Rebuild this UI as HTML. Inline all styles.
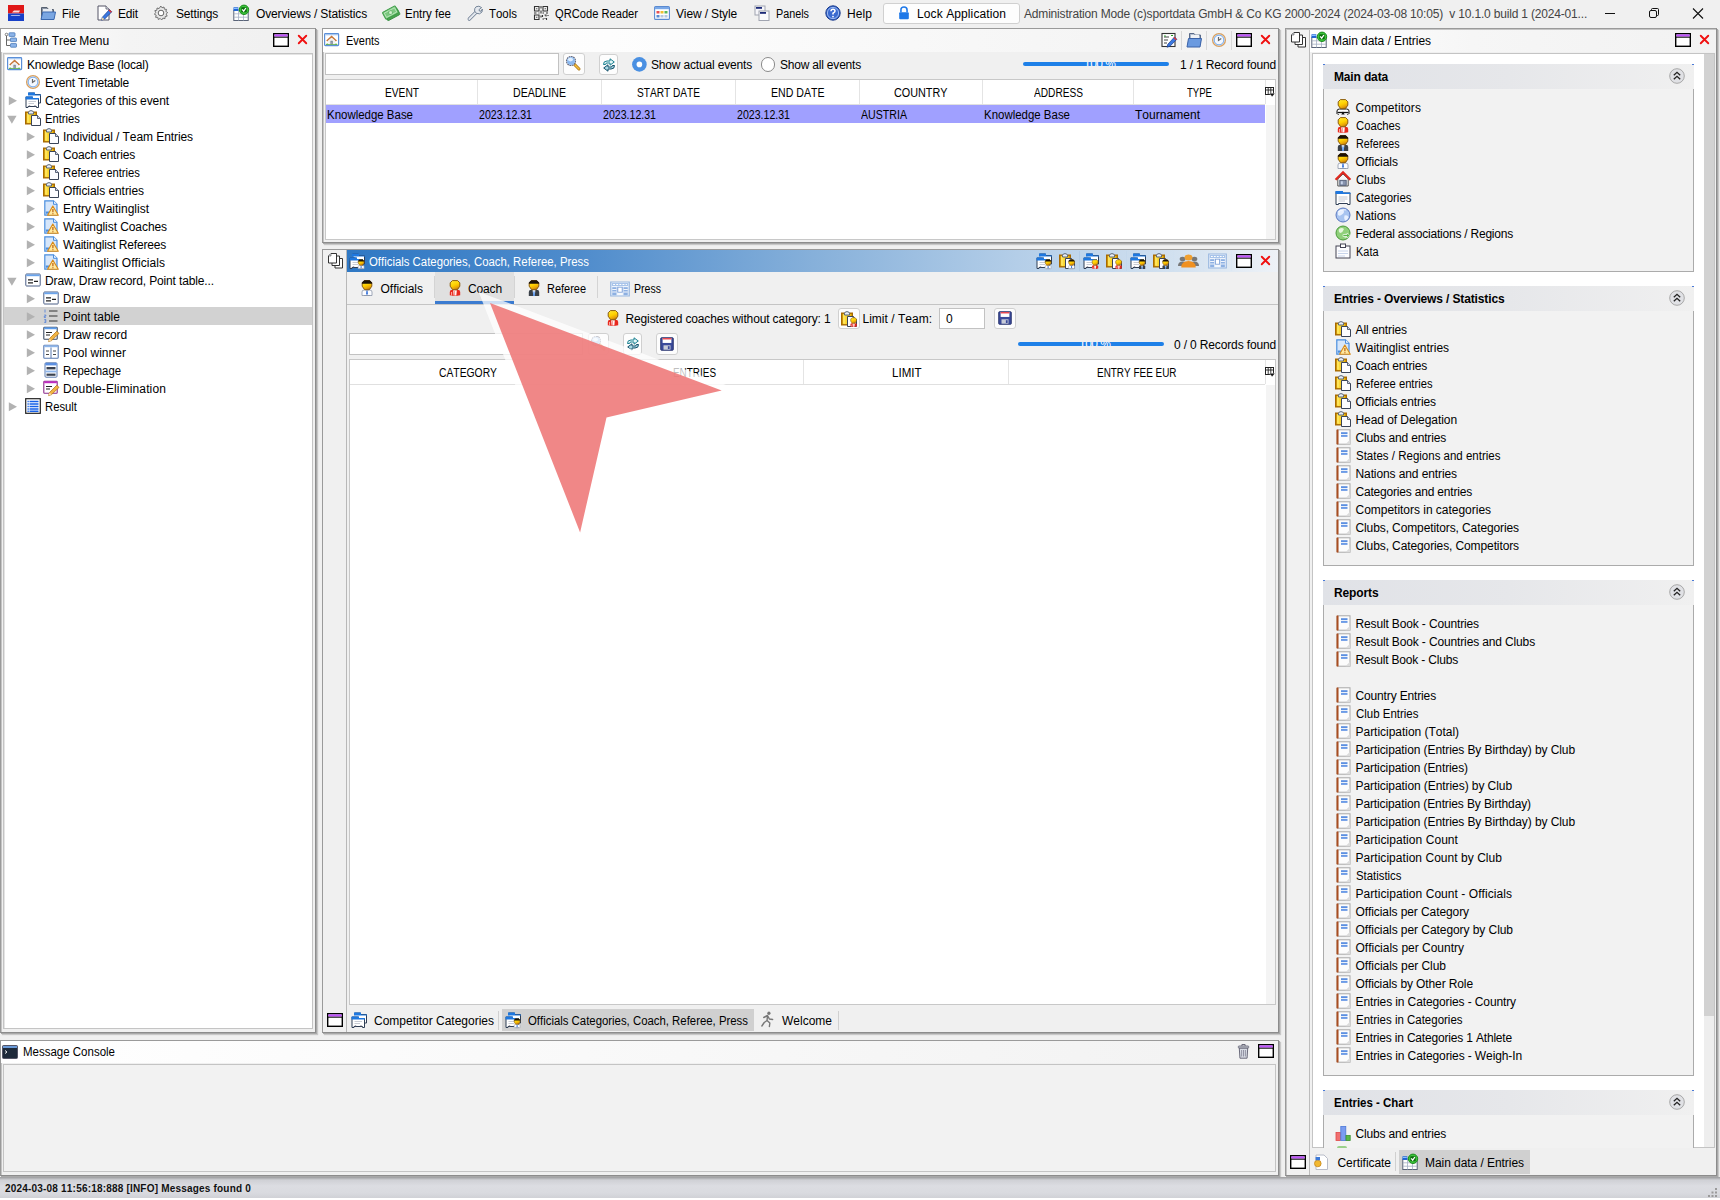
<!DOCTYPE html><html><head><meta charset="utf-8"><title>Sportdata Event Manager</title><style>html,body{margin:0;padding:0}body{width:1720px;height:1200px;position:relative;overflow:hidden;background:#f0f0f0;font-family:"Liberation Sans",sans-serif;font-size:12px;color:#000}
div,span.t{position:absolute}span.t{white-space:pre;font-kerning:none}svg{overflow:visible}</style></head><body>
<svg width="0" height="0" style="position:absolute"><defs><linearGradient id="gy" x1=".2" x2=".6" y1="0" y2="1"><stop offset="0" stop-color="#ffe630"/><stop offset=".5" stop-color="#ffd000"/><stop offset=".8" stop-color="#e8a408"/><stop offset="1" stop-color="#b87408"/></linearGradient><linearGradient id="gc" x1="0" x2="1" y1="0" y2="0"><stop offset="0" stop-color="#d8a000"/><stop offset=".25" stop-color="#ffe040"/><stop offset="1" stop-color="#e8b000"/></linearGradient></defs></svg>
<svg style="position:absolute;left:8px;top:5px" width="16" height="16" viewBox="0 0 16 16" preserveAspectRatio="none"><rect width="16" height="8.500" fill="#e01818"/><rect y="8.500" width="16" height="7.500" fill="#1840c8"/><path d="M4 7.500L6 5.500H12L11 7.500Z" fill="#fff" opacity=".85"/><path d="M2.500 10H12.500L11.500 11H3.500Z" fill="#c8d0f0" opacity=".8"/></svg>
<svg style="position:absolute;left:40px;top:5px" width="16" height="16" viewBox="0 0 16 16" preserveAspectRatio="none"><path d="M1.5 14V2.5H7L8.5 4.5H13.5V14Z" fill="#8a94a4" stroke="#566070" stroke-width="1"/><path d="M3 4H12V7H3Z" fill="#e8ecf2"/><path d="M1 14.5L2.8 7H15.5L14 14.5Z" fill="#7aa6e2" stroke="#3a68b0" stroke-width="1"/></svg>
<span class="t" id="t0" style="top:7.03px;font-size:12px;line-height:14px;letter-spacing:0.000px;left:62px;transform:scaleX(0.9305);transform-origin:0 0;">File</span>
<svg style="position:absolute;left:96px;top:5px" width="16" height="16" viewBox="0 0 16 16" preserveAspectRatio="none"><path d="M2 1H10L13 4V15H2Z" fill="#fff" stroke="#556" stroke-width="1"/><path d="M10 1V4H13" fill="#e4e8f0" stroke="#556" stroke-width=".8"/><path d="M13.5 4.5L15.8 6.8L8.5 14.2L5.5 15.2L6.4 12.2Z" fill="#3a78e0" stroke="#1a3a8a" stroke-width=".7"/><path d="M13.5 4.5L15.8 6.8L14.8 7.8L12.5 5.5Z" fill="#e83030"/><path d="M5.5 15.2L6.4 12.2L8.5 14.2Z" fill="#f4d8a0"/></svg>
<span class="t" id="t1" style="top:7.03px;font-size:12px;line-height:14px;letter-spacing:-0.172px;left:118px;">Edit</span>
<svg style="position:absolute;left:153px;top:5px" width="16" height="16" viewBox="0 0 16 16" preserveAspectRatio="none"><path d="M8 .8L9.2 2.6L11.2 1.8L11.6 4L13.8 4.2L13 6.2L14.9 7.4L13.3 8.9L14.4 10.9L12.3 11.3L12.2 13.5L10.1 12.9L8.9 14.8L7.4 13.2L5.5 14.3L5 12.2L2.8 12.1L3.4 10L1.5 8.9L3.1 7.4L2 5.5L4.100 5L4.2 2.800L6.300 3.400Z" fill="#e8e8e8" stroke="#666" stroke-width=".9" transform="translate(-.2,.2)"/><circle cx="8" cy="8" r="2.8" fill="#fff" stroke="#666" stroke-width="1"/></svg>
<span class="t" id="t2" style="top:7.03px;font-size:12px;line-height:14px;letter-spacing:-0.170px;left:176px;">Settings</span>
<svg style="position:absolute;left:233px;top:5px" width="16" height="16" viewBox="0 0 16 16" preserveAspectRatio="none"><rect x=".8" y="5.200" width="14.400" height="10.300" fill="#fff" stroke="#5a6478" stroke-width="1"/><path d="M1 8.800H15M1 12.200H15M5.500 5.200V15.500M10.500 8.800V15.500" stroke="#a4b0c4" stroke-width=".8"/><rect x=".5" y="2.300" width="4.800" height="3.600" fill="#1c64d8"/><rect x="1" y="3" width="3.800" height="1" fill="#8cc0ff"/><circle cx="11" cy="4.800" r="4.700" fill="#3cc43c" stroke="#1c8c1c" stroke-width="1"/><rect x="8.300" y="2.300" width="5.400" height="5" rx=".6" fill="#0c6c0c"/><path d="M9.200 4.300L10.700 6.200L12.900 3" fill="none" stroke="#fff" stroke-width="1.300"/></svg>
<span class="t" id="t3" style="top:7.03px;font-size:12px;line-height:14px;letter-spacing:-0.138px;left:256px;">Overviews / Statistics</span>
<svg style="position:absolute;left:383px;top:5px" width="16" height="16" viewBox="0 0 16 16" preserveAspectRatio="none"><g transform="rotate(-28 8 8)"><rect x="1.500" y="6" width="14" height="7.500" rx="1" fill="#4aa450" stroke="#2f8a3a" stroke-width=".8"/><rect x=".5" y="3.500" width="14.500" height="7.800" rx="1" fill="#7cc880" stroke="#3a9a44" stroke-width=".9"/><rect x="2" y="5" width="11.500" height="4.800" fill="none" stroke="#c8ecc8" stroke-width=".7"/><circle cx="7.800" cy="7.400" r="1.900" fill="#d4f0d0" stroke="#3a9a44" stroke-width=".5"/></g></svg>
<span class="t" id="t4" style="top:7.03px;font-size:12px;line-height:14px;letter-spacing:0.000px;left:405px;transform:scaleX(0.9577);transform-origin:0 0;">Entry fee</span>
<svg style="position:absolute;left:467px;top:5px" width="16" height="16" viewBox="0 0 16 16" preserveAspectRatio="none"><path d="M2.300 14L8.800 7.500" stroke="#6a7a90" stroke-width="3.400" stroke-linecap="round"/><path d="M2.300 14L8.800 7.500" stroke="#e4e8ee" stroke-width="1.900" stroke-linecap="round"/><path d="M9 1.800Q12 .2 14.600 2.600L12 4.600L12.400 6L14 6.200L15.400 4Q16 7.600 12.600 8.800Q8.600 9.200 7.600 6Q7.200 3.400 9 1.800Z" fill="#e4e8ee" stroke="#6a7a90" stroke-width=".9"/></svg>
<span class="t" id="t5" style="top:7.03px;font-size:12px;line-height:14px;letter-spacing:0.000px;left:489px;transform:scaleX(0.9542);transform-origin:0 0;">Tools</span>
<svg style="position:absolute;left:533px;top:5px" width="16" height="16" viewBox="0 0 16 16" preserveAspectRatio="none"><path d="M1.500 1.500H6V6H1.500ZM10 1.500H14.500V6H10ZM1.500 10H6V14.500H1.500Z" fill="none" stroke="#333" stroke-width="1.100"/><path d="M3.200 3.200H4.300V4.300H3.200ZM11.700 3.200H12.800V4.300H11.700ZM3.200 11.700H4.300V12.800H3.200Z" fill="#333"/><path d="M8 1V3.500M8 5.500V8.500M1 8H3.500M5.500 8H6.500M9.500 8H11M13 8H15M9.500 10V12M11.500 10H13V11.500M9.500 14H11M13.500 13V15M15 10V11M8 10.500V12.500M11.500 13.500H12.500" stroke="#333" stroke-width="1.100" fill="none"/></svg>
<span class="t" id="t6" style="top:7.03px;font-size:12px;line-height:14px;letter-spacing:0.000px;left:555px;transform:scaleX(0.9285);transform-origin:0 0;">QRCode Reader</span>
<svg style="position:absolute;left:654px;top:5px" width="16" height="16" viewBox="0 0 16 16" preserveAspectRatio="none"><rect x=".6" y="1.6" width="14.8" height="12.8" rx="1" fill="#fff" stroke="#5a8ad0" stroke-width="1.1"/><rect x="1" y="2" width="14" height="2.2" fill="#7aa8e8"/><rect x="2.5" y="6" width="3" height="2.5" fill="#e85050"/><rect x="6.5" y="6" width="3" height="2.5" fill="#f0c030"/><rect x="10.500" y="6" width="3" height="2.5" fill="#5ab85a"/><rect x="2.5" y="10" width="3" height="2.5" fill="#5a8ad0"/><rect x="6.500" y="10" width="3" height="2.5" fill="#b8c8e0"/><rect x="10.500" y="10" width="3" height="2.5" fill="#b8c8e0"/></svg>
<span class="t" id="t7" style="top:7.03px;font-size:12px;line-height:14px;letter-spacing:-0.142px;left:676px;">View / Style</span>
<svg style="position:absolute;left:754px;top:5px" width="16" height="16" viewBox="0 0 16 16" preserveAspectRatio="none"><rect x="1" y="1" width="10" height="9" fill="#f6f6fa" stroke="#a0a4b0" stroke-width="1"/><rect x="2" y="2" width="6" height="1.800" fill="#1c2a78"/><rect x="5" y="6" width="10" height="9.500" fill="#fbfbfd" stroke="#a0a4b0" stroke-width="1"/><rect x="6" y="7" width="6" height="1.800" fill="#1c2a78"/></svg>
<span class="t" id="t8" style="top:7.03px;font-size:12px;line-height:14px;letter-spacing:0.000px;left:776px;transform:scaleX(0.8991);transform-origin:0 0;">Panels</span>
<svg style="position:absolute;left:825px;top:5px" width="16" height="16" viewBox="0 0 16 16" preserveAspectRatio="none"><circle cx="8" cy="8" r="7.2" fill="#3a6ad0" stroke="#1a3a8a" stroke-width="1"/><circle cx="8" cy="8" r="5.6" fill="none" stroke="#9ab8f0" stroke-width="1"/><path d="M6 6.2Q6 4.200 8 4.200Q10 4.200 10 6Q10 7.200 8 8.200V9.600" fill="none" stroke="#fff" stroke-width="1.500"/><circle cx="8" cy="11.600" r=".9" fill="#fff"/></svg>
<span class="t" id="t9" style="top:7.03px;font-size:12px;line-height:14px;letter-spacing:0.078px;left:847px;">Help</span>
<div style="left:883px;top:3px;width:137px;height:21px;background:#fdfdfd;border:1px solid #d0d0d0;border-radius:3px;box-sizing:border-box;"></div>
<svg style="position:absolute;left:897px;top:6px" width="14" height="14" viewBox="0 0 16 16" preserveAspectRatio="none"><path d="M4.5 7V4.500Q4.500 1.200 8 1.200Q11.500 1.200 11.500 4.500V7" fill="none" stroke="#1e78e8" stroke-width="1.800"/><rect x="2.500" y="7" width="11" height="8.200" rx="1.200" fill="#1e78e8"/></svg>
<span class="t" id="t10" style="top:7.03px;font-size:12px;line-height:14px;letter-spacing:0.101px;left:917px;">Lock Application</span>
<span class="t" id="t11" style="top:7.03px;font-size:12px;line-height:14px;letter-spacing:-0.179px;left:1024px;color:#444;">Administration Mode (c)sportdata GmbH &amp; Co KG 2000-2024 (2024-03-08 10:05)  v 10.1.0 build 1 (2024-01...</span>
<svg style="position:absolute;left:1600px;top:4px" width="116" height="20" viewBox="0 0 116 20"><path d="M5 9.500H15" stroke="#111" stroke-width="1"/><rect x="49.500" y="6.500" width="7" height="7" rx="1.500" fill="none" stroke="#111" stroke-width="1"/><path d="M51.500 6.500V5.500Q51.500 4.500 52.500 4.500H57.500Q58.500 4.500 58.500 5.500V10.500Q58.500 11.500 57.500 11.500H56.500" fill="none" stroke="#111" stroke-width="1"/><path d="M93 4.500L103 14.500M103 4.500L93 14.500" stroke="#111" stroke-width="1.100"/></svg>
<div style="left:0px;top:28px;width:316px;height:1005px;background:#f0f0f0;border:1px solid #9a9a9a;border-right-color:#8c8c8c;border-bottom-color:#8c8c8c;box-shadow:1px 1px 0 #a8a8a8, 2px 2px 1px #c8c8c8, inset 1px 1px 0 #c4c4c4;box-sizing:border-box;"></div>
<div style="left:1px;top:29px;width:314px;height:23px;background:linear-gradient(90deg,#fff 0,#f4f4f4 40%,#f0f0f0 100%);"></div>
<svg style="position:absolute;left:4px;top:32px" width="16" height="16" viewBox="0 0 16 16" preserveAspectRatio="none"><path d="M2.5 3V13.5H6M2.5 8H6" fill="none" stroke="#666" stroke-width="1"/><circle cx="2.5" cy="2.5" r="1.3" fill="#fff" stroke="#666" stroke-width=".8"/><rect x="5" y="0.8" width="6" height="3.6" rx=".6" fill="#8db5ea" stroke="#4a7ab8" stroke-width=".8"/><rect x="6.5" y="6" width="6" height="3.6" rx=".6" fill="#8db5ea" stroke="#4a7ab8" stroke-width=".8"/><rect x="6.5" y="11.6" width="6" height="3.6" rx=".6" fill="#8db5ea" stroke="#4a7ab8" stroke-width=".8"/></svg>
<span class="t" id="t12" style="top:34.03px;font-size:12px;line-height:14px;letter-spacing:-0.098px;left:23px;">Main Tree Menu</span>
<svg style="position:absolute;left:273px;top:32px" width="16" height="16" viewBox="0 0 16 16" preserveAspectRatio="none"><rect x=".7" y="1.7" width="14.6" height="12.6" fill="#fff" stroke="#000" stroke-width="1.4"/><rect x="1.4" y="2.4" width="13.2" height="2.2" fill="#c050ff"/><path d="M1 5.2H15" stroke="#000" stroke-width="1"/></svg>
<svg style="position:absolute;left:295px;top:32px" width="15" height="15" viewBox="0 0 16 16" preserveAspectRatio="none"><path d="M4 4L12 12M12 4L4 12" stroke="#f01010" stroke-width="2" stroke-linecap="round"/></svg>
<div style="left:3px;top:53px;width:310px;height:976px;background:#fff;border:1px solid #c4c4c4;box-sizing:border-box;box-shadow:inset 1px 1px 0 #e4e4e4;"></div>
<svg style="position:absolute;left:7px;top:57px" width="16" height="16" viewBox="0 0 16 16" preserveAspectRatio="none"><rect x=".6" y=".6" width="14" height="12" rx=".8" fill="#fff" stroke="#5b8fd8" stroke-width="1.200"/><rect x="1.200" y="1" width="12.800" height="1.300" fill="#a8c8f0"/><path d="M7.600 2.600L13 7.600L11.900 8.600L7.600 4.800L3.300 8.600L2.200 7.600Z" fill="#c8783a"/><path d="M4.300 7.600L7.600 4.800L10.900 7.600V11.300H4.300Z" fill="#f2f2f2"/><rect x="6.500" y="7.800" width="2.200" height="3.500" fill="#6b7686"/><rect x="7.100" y="8.400" width="1" height="2.900" fill="#9aa4b4"/><path d="M1.800 11.600Q3.300 9.600 4.600 11.600ZM10.600 11.600Q12 9.600 13.400 11.600Z" fill="#4fae3a"/><path d="M1.800 11.500H13.400" stroke="#58a848" stroke-width=".8"/></svg>
<span class="t" id="t13" style="top:58.03px;font-size:12px;line-height:14px;letter-spacing:-0.208px;left:27px;">Knowledge Base (local)</span>
<svg style="position:absolute;left:25px;top:74px" width="16" height="16" viewBox="0 0 16 16" preserveAspectRatio="none"><circle cx="8" cy="8" r="6.400" fill="#f6f9ff" stroke="#d8a060" stroke-width="1.300"/><circle cx="8" cy="8" r="4.900" fill="#f4f8ff" stroke="#6aa4ea" stroke-width="1"/><path d="M7.500 5V8.400L10.300 6.500" fill="none" stroke="#666" stroke-width="1.200"/></svg>
<span class="t" id="t14" style="top:76.03px;font-size:12px;line-height:14px;letter-spacing:-0.181px;left:45px;">Event Timetable</span>
<svg style="position:absolute;left:25px;top:92px" width="16" height="16" viewBox="0 0 16 16" preserveAspectRatio="none"><path d="M3.5 2.5V1H9.5V2.5H15.5V11H13" fill="#fff" stroke="#2f3e55" stroke-width="1"/><path d="M3 0.6H10V2.4H16V3.6H3Z" fill="#1e78e0"/><path d="M1 15.5V5H7.5V6.5H13.5V15.5H11.5V14.5H3V15.5Z" fill="#fff" stroke="#2f3e55" stroke-width="1"/><path d="M0.5 4.5H8V6H14V7.4H0.5Z" fill="#1e78e0"/><path d="M3.5 9.5H11M3.5 11.5H9" stroke="#c8ccd4" stroke-width="1"/><path d="M3.8 14H5.2M9.3 14H10.7" stroke="#556" stroke-width="1"/></svg>
<span class="t" id="t15" style="top:94.03px;font-size:12px;line-height:14px;letter-spacing:-0.087px;left:45px;">Categories of this event</span>
<svg style="position:absolute;left:8px;top:95.5px" width="10" height="10" viewBox="0 0 10 10"><path d="M.8 .2L9 4.700L.8 9.200Z" fill="#b2b2b2"/></svg>
<svg style="position:absolute;left:25px;top:110px" width="16" height="16" viewBox="0 0 16 16" preserveAspectRatio="none"><rect x=".7" y="2.2" width="10.6" height="11.6" fill="url(#gc)" stroke="#a86a00" stroke-width="1.4"/><rect x="2" y="3.5" width="2" height="9" fill="#ffe45a"/><path d="M3.5 4V2.2Q3.5 1 6 0.6Q8.5 1 8.5 2.2V4Z" fill="#e8eef6" stroke="#5a6678" stroke-width="1"/><path d="M6.5 5.5H12.5L15.5 8.5V15.5H6.5Z" fill="#fdfdff" stroke="#3a4458" stroke-width="1"/><path d="M12.5 5.5V8.5H15.5" fill="#cfd4e8" stroke="#3a4458" stroke-width=".8"/></svg>
<span class="t" id="t16" style="top:112.03px;font-size:12px;line-height:14px;letter-spacing:0.000px;left:45px;transform:scaleX(0.9368);transform-origin:0 0;">Entries</span>
<svg style="position:absolute;left:7px;top:114.5px" width="10" height="10" viewBox="0 0 10 10"><path d="M.2 .8H9.600L4.900 8.800Z" fill="#b2b2b2"/></svg>
<svg style="position:absolute;left:43px;top:128px" width="16" height="16" viewBox="0 0 16 16" preserveAspectRatio="none"><rect x=".7" y="2.2" width="10.6" height="11.6" fill="url(#gc)" stroke="#a86a00" stroke-width="1.4"/><rect x="2" y="3.5" width="2" height="9" fill="#ffe45a"/><path d="M3.5 4V2.2Q3.5 1 6 0.6Q8.5 1 8.5 2.2V4Z" fill="#e8eef6" stroke="#5a6678" stroke-width="1"/><path d="M6.5 5.5H12.5L15.5 8.5V15.5H6.5Z" fill="#fdfdff" stroke="#3a4458" stroke-width="1"/><path d="M12.5 5.5V8.5H15.5" fill="#cfd4e8" stroke="#3a4458" stroke-width=".8"/></svg>
<span class="t" id="t17" style="top:130.03px;font-size:12px;line-height:14px;letter-spacing:-0.083px;left:63px;">Individual / Team Entries</span>
<svg style="position:absolute;left:26px;top:131.5px" width="10" height="10" viewBox="0 0 10 10"><path d="M.8 .2L9 4.700L.8 9.200Z" fill="#b2b2b2"/></svg>
<svg style="position:absolute;left:43px;top:146px" width="16" height="16" viewBox="0 0 16 16" preserveAspectRatio="none"><rect x=".7" y="2.2" width="10.6" height="11.6" fill="url(#gc)" stroke="#a86a00" stroke-width="1.4"/><rect x="2" y="3.5" width="2" height="9" fill="#ffe45a"/><path d="M3.5 4V2.2Q3.5 1 6 0.6Q8.5 1 8.5 2.2V4Z" fill="#e8eef6" stroke="#5a6678" stroke-width="1"/><path d="M6.5 5.5H12.5L15.5 8.5V15.5H6.5Z" fill="#fdfdff" stroke="#3a4458" stroke-width="1"/><path d="M12.5 5.5V8.5H15.5" fill="#cfd4e8" stroke="#3a4458" stroke-width=".8"/></svg>
<span class="t" id="t18" style="top:148.03px;font-size:12px;line-height:14px;letter-spacing:-0.157px;left:63px;">Coach entries</span>
<svg style="position:absolute;left:26px;top:149.5px" width="10" height="10" viewBox="0 0 10 10"><path d="M.8 .2L9 4.700L.8 9.200Z" fill="#b2b2b2"/></svg>
<svg style="position:absolute;left:43px;top:164px" width="16" height="16" viewBox="0 0 16 16" preserveAspectRatio="none"><rect x=".7" y="2.2" width="10.6" height="11.6" fill="url(#gc)" stroke="#a86a00" stroke-width="1.4"/><rect x="2" y="3.5" width="2" height="9" fill="#ffe45a"/><path d="M3.5 4V2.2Q3.5 1 6 0.6Q8.5 1 8.5 2.2V4Z" fill="#e8eef6" stroke="#5a6678" stroke-width="1"/><path d="M6.5 5.5H12.5L15.5 8.5V15.5H6.5Z" fill="#fdfdff" stroke="#3a4458" stroke-width="1"/><path d="M12.5 5.5V8.5H15.5" fill="#cfd4e8" stroke="#3a4458" stroke-width=".8"/></svg>
<span class="t" id="t19" style="top:166.03px;font-size:12px;line-height:14px;letter-spacing:0.000px;left:63px;transform:scaleX(0.9385);transform-origin:0 0;">Referee entries</span>
<svg style="position:absolute;left:26px;top:167.5px" width="10" height="10" viewBox="0 0 10 10"><path d="M.8 .2L9 4.700L.8 9.200Z" fill="#b2b2b2"/></svg>
<svg style="position:absolute;left:43px;top:182px" width="16" height="16" viewBox="0 0 16 16" preserveAspectRatio="none"><rect x=".7" y="2.2" width="10.6" height="11.6" fill="url(#gc)" stroke="#a86a00" stroke-width="1.4"/><rect x="2" y="3.5" width="2" height="9" fill="#ffe45a"/><path d="M3.5 4V2.2Q3.5 1 6 0.6Q8.5 1 8.5 2.2V4Z" fill="#e8eef6" stroke="#5a6678" stroke-width="1"/><path d="M6.5 5.5H12.5L15.5 8.5V15.5H6.5Z" fill="#fdfdff" stroke="#3a4458" stroke-width="1"/><path d="M12.5 5.5V8.5H15.5" fill="#cfd4e8" stroke="#3a4458" stroke-width=".8"/></svg>
<span class="t" id="t20" style="top:184.03px;font-size:12px;line-height:14px;letter-spacing:-0.061px;left:63px;">Officials entries</span>
<svg style="position:absolute;left:26px;top:185.5px" width="10" height="10" viewBox="0 0 10 10"><path d="M.8 .2L9 4.700L.8 9.200Z" fill="#b2b2b2"/></svg>
<svg style="position:absolute;left:43px;top:200px" width="16" height="16" viewBox="0 0 16 16" preserveAspectRatio="none"><path d="M1.8 0.8H10.5L14 4.3V15.2H1.8Z" fill="#d6e6fa" stroke="#4a8ede" stroke-width="1.2"/><path d="M10.5 0.8V4.3H14" fill="#eaf2fd" stroke="#4a8ede" stroke-width="1"/><rect x="2.8" y="11.5" width="3.5" height="2.2" fill="#4a8ede"/><path d="M9.8 6L15.3 15.2H4.6Z" fill="#ffe9a0" stroke="#d88a18" stroke-width="1.1" stroke-linejoin="round"/><path d="M9.9 9V12.3M9.9 13.3V14.3" stroke="#c0681a" stroke-width="1.3"/></svg>
<span class="t" id="t21" style="top:202.03px;font-size:12px;line-height:14px;letter-spacing:-0.002px;left:63px;">Entry Waitinglist</span>
<svg style="position:absolute;left:26px;top:203.5px" width="10" height="10" viewBox="0 0 10 10"><path d="M.8 .2L9 4.700L.8 9.200Z" fill="#b2b2b2"/></svg>
<svg style="position:absolute;left:43px;top:218px" width="16" height="16" viewBox="0 0 16 16" preserveAspectRatio="none"><path d="M1.8 0.8H10.5L14 4.3V15.2H1.8Z" fill="#d6e6fa" stroke="#4a8ede" stroke-width="1.2"/><path d="M10.5 0.8V4.3H14" fill="#eaf2fd" stroke="#4a8ede" stroke-width="1"/><rect x="2.8" y="11.5" width="3.5" height="2.2" fill="#4a8ede"/><path d="M9.8 6L15.3 15.2H4.6Z" fill="#ffe9a0" stroke="#d88a18" stroke-width="1.1" stroke-linejoin="round"/><path d="M9.9 9V12.3M9.9 13.3V14.3" stroke="#c0681a" stroke-width="1.3"/></svg>
<span class="t" id="t22" style="top:220.03px;font-size:12px;line-height:14px;letter-spacing:-0.072px;left:63px;">Waitinglist Coaches</span>
<svg style="position:absolute;left:26px;top:221.5px" width="10" height="10" viewBox="0 0 10 10"><path d="M.8 .2L9 4.700L.8 9.200Z" fill="#b2b2b2"/></svg>
<svg style="position:absolute;left:43px;top:236px" width="16" height="16" viewBox="0 0 16 16" preserveAspectRatio="none"><path d="M1.8 0.8H10.5L14 4.3V15.2H1.8Z" fill="#d6e6fa" stroke="#4a8ede" stroke-width="1.2"/><path d="M10.5 0.8V4.3H14" fill="#eaf2fd" stroke="#4a8ede" stroke-width="1"/><rect x="2.8" y="11.5" width="3.5" height="2.2" fill="#4a8ede"/><path d="M9.8 6L15.3 15.2H4.6Z" fill="#ffe9a0" stroke="#d88a18" stroke-width="1.1" stroke-linejoin="round"/><path d="M9.9 9V12.3M9.9 13.3V14.3" stroke="#c0681a" stroke-width="1.3"/></svg>
<span class="t" id="t23" style="top:238.03px;font-size:12px;line-height:14px;letter-spacing:-0.186px;left:63px;">Waitinglist Referees</span>
<svg style="position:absolute;left:26px;top:239.5px" width="10" height="10" viewBox="0 0 10 10"><path d="M.8 .2L9 4.700L.8 9.200Z" fill="#b2b2b2"/></svg>
<svg style="position:absolute;left:43px;top:254px" width="16" height="16" viewBox="0 0 16 16" preserveAspectRatio="none"><path d="M1.8 0.8H10.5L14 4.3V15.2H1.8Z" fill="#d6e6fa" stroke="#4a8ede" stroke-width="1.2"/><path d="M10.5 0.8V4.3H14" fill="#eaf2fd" stroke="#4a8ede" stroke-width="1"/><rect x="2.8" y="11.5" width="3.5" height="2.2" fill="#4a8ede"/><path d="M9.8 6L15.3 15.2H4.6Z" fill="#ffe9a0" stroke="#d88a18" stroke-width="1.1" stroke-linejoin="round"/><path d="M9.9 9V12.3M9.9 13.3V14.3" stroke="#c0681a" stroke-width="1.3"/></svg>
<span class="t" id="t24" style="top:256.03px;font-size:12px;line-height:14px;letter-spacing:0.062px;left:63px;">Waitinglist Officials</span>
<svg style="position:absolute;left:26px;top:257.5px" width="10" height="10" viewBox="0 0 10 10"><path d="M.8 .2L9 4.700L.8 9.200Z" fill="#b2b2b2"/></svg>
<svg style="position:absolute;left:25px;top:272px" width="16" height="16" viewBox="0 0 16 16" preserveAspectRatio="none"><rect x=".8" y="2" width="14.400" height="12" rx=".8" fill="#fff" stroke="#4a5e86" stroke-width="1"/><rect x="1.300" y="2.400" width="13.400" height="1.800" fill="#6aa4ec"/><path d="M3 7.800H8M3 10.800H8M9 9.300H13" stroke="#222" stroke-width="1.200"/></svg>
<span class="t" id="t25" style="top:274.03px;font-size:12px;line-height:14px;letter-spacing:-0.134px;left:45px;">Draw, Draw record, Point table...</span>
<svg style="position:absolute;left:7px;top:276.5px" width="10" height="10" viewBox="0 0 10 10"><path d="M.2 .8H9.600L4.900 8.800Z" fill="#b2b2b2"/></svg>
<svg style="position:absolute;left:43px;top:290px" width="16" height="16" viewBox="0 0 16 16" preserveAspectRatio="none"><rect x=".8" y="2" width="14.400" height="12" rx=".8" fill="#fff" stroke="#4a5e86" stroke-width="1"/><rect x="1.300" y="2.400" width="13.400" height="1.800" fill="#6aa4ec"/><path d="M3 7.800H8M3 10.800H8M9 9.300H13" stroke="#222" stroke-width="1.200"/></svg>
<span class="t" id="t26" style="top:292.03px;font-size:12px;line-height:14px;letter-spacing:0.000px;left:63px;transform:scaleX(0.9637);transform-origin:0 0;">Draw</span>
<svg style="position:absolute;left:26px;top:293.5px" width="10" height="10" viewBox="0 0 10 10"><path d="M.8 .2L9 4.700L.8 9.200Z" fill="#b2b2b2"/></svg>
<div style="left:4px;top:307px;width:308px;height:18px;background:#d2d2d2;"></div>
<svg style="position:absolute;left:43px;top:308px" width="16" height="16" viewBox="0 0 16 16" preserveAspectRatio="none"><path d="M6 3H14.500M6 8H14.500M6 13H14.500" stroke="#333" stroke-width="1.100"/><path d="M2 1.5V4.5M1.3 7H2.8V8.2H1.3V9.5H2.8M1.3 11.5H2.8V14.5H1.3M1.5 13H2.8" stroke="#4a7ad8" stroke-width=".8" fill="none"/></svg>
<span class="t" id="t27" style="top:310.03px;font-size:12px;line-height:14px;letter-spacing:0.026px;left:63px;">Point table</span>
<svg style="position:absolute;left:26px;top:311.5px" width="10" height="10" viewBox="0 0 10 10"><path d="M.8 .2L9 4.700L.8 9.200Z" fill="#b2b2b2"/></svg>
<svg style="position:absolute;left:43px;top:326px" width="16" height="16" viewBox="0 0 16 16" preserveAspectRatio="none"><rect x=".8" y="1.2" width="13.4" height="12" rx=".8" fill="#fff" stroke="#3a4a62" stroke-width="1.1"/><rect x="1.2" y="1.4" width="12.6" height="1.8" fill="#5c9cec"/><path d="M3 6.5H9M3 9H7" stroke="#222" stroke-width="1.2"/><path d="M13.8 5.2L16 7.4L8.5 14.6L5.6 15.6L6.5 12.6Z" fill="#f2b544" stroke="#b8781c" stroke-width=".8"/><path d="M5.6 15.6L6.5 12.6L8.5 14.6Z" fill="#f6dcae"/></svg>
<span class="t" id="t28" style="top:328.03px;font-size:12px;line-height:14px;letter-spacing:-0.124px;left:63px;">Draw record</span>
<svg style="position:absolute;left:26px;top:329.5px" width="10" height="10" viewBox="0 0 10 10"><path d="M.8 .2L9 4.700L.8 9.200Z" fill="#b2b2b2"/></svg>
<svg style="position:absolute;left:43px;top:344px" width="16" height="16" viewBox="0 0 16 16" preserveAspectRatio="none"><rect x=".8" y="1.2" width="14.4" height="13" rx=".8" fill="#fff" stroke="#5a7ab0" stroke-width="1.1"/><rect x="1.2" y="1.4" width="13.6" height="1.8" fill="#8db5ea"/><path d="M8 3.5V14" stroke="#5a7ab0" stroke-width="1"/><path d="M3 7H6M3 10.5H6M10 7H13M10 10.5H13" stroke="#444" stroke-width="1.2"/></svg>
<span class="t" id="t29" style="top:346.03px;font-size:12px;line-height:14px;letter-spacing:0.027px;left:63px;">Pool winner</span>
<svg style="position:absolute;left:26px;top:347.5px" width="10" height="10" viewBox="0 0 10 10"><path d="M.8 .2L9 4.700L.8 9.200Z" fill="#b2b2b2"/></svg>
<svg style="position:absolute;left:43px;top:362px" width="16" height="16" viewBox="0 0 16 16" preserveAspectRatio="none"><rect x="2" y=".8" width="12" height="14.4" rx="1" fill="#fff" stroke="#5a7ab0" stroke-width="1"/><rect x="2.4" y="1" width="11.2" height="2.4" fill="#5c8fe0"/><rect x="3.5" y="5" width="9" height="2.4" fill="#3a4250"/><rect x="2.4" y="8.6" width="11.2" height="1.8" fill="#8db5ea"/><rect x="3.5" y="11.6" width="9" height="2.2" fill="#3a4250"/></svg>
<span class="t" id="t30" style="top:364.03px;font-size:12px;line-height:14px;letter-spacing:0.000px;left:63px;transform:scaleX(0.9448);transform-origin:0 0;">Repechage</span>
<svg style="position:absolute;left:26px;top:365.5px" width="10" height="10" viewBox="0 0 10 10"><path d="M.8 .2L9 4.700L.8 9.200Z" fill="#b2b2b2"/></svg>
<svg style="position:absolute;left:43px;top:380px" width="16" height="16" viewBox="0 0 16 16" preserveAspectRatio="none"><rect x=".8" y="1.2" width="13.4" height="12" rx=".8" fill="#fff" stroke="#8a2a8a" stroke-width="1.1"/><rect x="1.2" y="1.4" width="12.6" height="1.8" fill="#c02ac0"/><path d="M3 6.5H9M3 9H7" stroke="#222" stroke-width="1.2"/><path d="M13.8 5.2L16 7.4L8.5 14.6L5.6 15.6L6.5 12.6Z" fill="#f2b544" stroke="#b8781c" stroke-width=".8"/><path d="M5.6 15.6L6.5 12.6L8.5 14.6Z" fill="#f6dcae"/></svg>
<span class="t" id="t31" style="top:382.03px;font-size:12px;line-height:14px;letter-spacing:0.127px;left:63px;">Double-Elimination</span>
<svg style="position:absolute;left:26px;top:383.5px" width="10" height="10" viewBox="0 0 10 10"><path d="M.8 .2L9 4.700L.8 9.200Z" fill="#b2b2b2"/></svg>
<svg style="position:absolute;left:25px;top:398px" width="16" height="16" viewBox="0 0 16 16" preserveAspectRatio="none"><rect x=".7" y=".7" width="14.6" height="14.6" fill="#fff" stroke="#222" stroke-width="1.2"/><path d="M2.5 3.5H13.5M2.5 6H13.5M2.5 8.5H13.5M2.5 11H13.5M2.5 13.2H13.5" stroke="#1560e8" stroke-width="1.5"/><path d="M4.2 2V14" stroke="#fff" stroke-width=".8"/></svg>
<span class="t" id="t32" style="top:400.03px;font-size:12px;line-height:14px;letter-spacing:0.000px;left:45px;transform:scaleX(0.9407);transform-origin:0 0;">Result</span>
<svg style="position:absolute;left:8px;top:401.5px" width="10" height="10" viewBox="0 0 10 10"><path d="M.8 .2L9 4.700L.8 9.200Z" fill="#b2b2b2"/></svg>
<div style="left:322px;top:28px;width:957px;height:215px;background:#f0f0f0;border:1px solid #9a9a9a;border-right-color:#8c8c8c;border-bottom-color:#8c8c8c;box-shadow:1px 1px 0 #a8a8a8, 2px 2px 1px #c8c8c8, inset 1px 1px 0 #c4c4c4;box-sizing:border-box;"></div>
<div style="left:323px;top:29px;width:955px;height:23px;background:linear-gradient(90deg,#fff 0,#fdfdfd 30%,#f2f2f2 100%);"></div>
<svg style="position:absolute;left:324px;top:33px" width="16" height="16" viewBox="0 0 16 16" preserveAspectRatio="none"><rect x=".6" y=".6" width="14" height="12" rx=".8" fill="#fff" stroke="#5b8fd8" stroke-width="1.200"/><rect x="1.200" y="1" width="12.800" height="1.300" fill="#a8c8f0"/><path d="M7.600 2.600L13 7.600L11.900 8.600L7.600 4.800L3.300 8.600L2.200 7.600Z" fill="#c8783a"/><path d="M4.300 7.600L7.600 4.800L10.900 7.600V11.300H4.300Z" fill="#f2f2f2"/><rect x="6.500" y="7.800" width="2.200" height="3.500" fill="#6b7686"/><rect x="7.100" y="8.400" width="1" height="2.900" fill="#9aa4b4"/><path d="M1.800 11.600Q3.300 9.600 4.600 11.600ZM10.600 11.600Q12 9.600 13.400 11.600Z" fill="#4fae3a"/><path d="M1.800 11.500H13.400" stroke="#58a848" stroke-width=".8"/></svg>
<span class="t" id="t33" style="top:34.03px;font-size:12px;line-height:14px;letter-spacing:0.000px;left:345.5px;transform:scaleX(0.9131);transform-origin:0 0;">Events</span>
<svg style="position:absolute;left:1161px;top:32px" width="16" height="16" viewBox="0 0 16 16" preserveAspectRatio="none"><rect x="1" y="1.500" width="13" height="13" fill="#fff" stroke="#333" stroke-width="1.100"/><path d="M3 5H8M3 8H7M3 11H6" stroke="#444" stroke-width="1"/><path d="M3.500 3.500L4.500 4.500M10 3.500H12" stroke="#28a028" stroke-width="1.200"/><path d="M13.500 5L15.800 7.300L9 14.200L6 15.200L6.900 12.200Z" fill="#3a78e0" stroke="#1a3a8a" stroke-width=".7"/><path d="M13.500 5L15.800 7.300L14.800 8.300L12.500 6Z" fill="#e83030"/></svg>
<div style="left:1181px;top:31px;width:1px;height:19px;background:#d8d8d8;"></div>
<svg style="position:absolute;left:1186px;top:32px" width="16" height="16" viewBox="0 0 16 16" preserveAspectRatio="none"><path d="M3.500 11V1.500H8L9 3H14.500V11Z" fill="#a8b4c8" stroke="#5a6a88" stroke-width="1"/><path d="M5 2.800H13V6H5Z" fill="#f0f2f6"/><path d="M1 15L2.500 6.500H15.500L14 15Z" fill="#6a9ae0" stroke="#3a62a8" stroke-width="1"/></svg>
<div style="left:1206px;top:31px;width:1px;height:19px;background:#d8d8d8;"></div>
<svg style="position:absolute;left:1211px;top:32px" width="16" height="16" viewBox="0 0 16 16" preserveAspectRatio="none"><circle cx="8" cy="8" r="6.400" fill="#f6f9ff" stroke="#d8a060" stroke-width="1.300"/><circle cx="8" cy="8" r="4.900" fill="#f4f8ff" stroke="#6aa4ea" stroke-width="1"/><path d="M7.500 5V8.400L10.300 6.500" fill="none" stroke="#666" stroke-width="1.200"/></svg>
<div style="left:1231px;top:31px;width:1px;height:19px;background:#d8d8d8;"></div>
<svg style="position:absolute;left:1236px;top:32px" width="16" height="16" viewBox="0 0 16 16" preserveAspectRatio="none"><rect x=".7" y="1.7" width="14.6" height="12.6" fill="#fff" stroke="#000" stroke-width="1.4"/><rect x="1.4" y="2.4" width="13.2" height="2.2" fill="#c050ff"/><path d="M1 5.2H15" stroke="#000" stroke-width="1"/></svg>
<svg style="position:absolute;left:1258px;top:32px" width="15" height="15" viewBox="0 0 16 16" preserveAspectRatio="none"><path d="M4 4L12 12M12 4L4 12" stroke="#f01010" stroke-width="2" stroke-linecap="round"/></svg>
<div style="left:325px;top:53px;width:234px;height:22px;background:#fff;border:1px solid #c2c2c2;box-sizing:border-box;"></div>
<div style="left:563px;top:53px;width:22px;height:22px;background:#fdfdfd;border:1px solid #d0d0d0;border-radius:3px;box-sizing:border-box;"></div>
<svg style="position:absolute;left:565px;top:55px" width="16" height="16" viewBox="0 0 16 16" preserveAspectRatio="none"><path d="M9.300 9.300L14 14" stroke="#a87010" stroke-width="3" stroke-linecap="round"/><path d="M9.800 9.800L14 14" stroke="#f4c040" stroke-width="1.600" stroke-linecap="round"/><circle cx="6" cy="6" r="4.500" fill="#a8ccf4" stroke="#667" stroke-width="1.100" stroke-dasharray="1.600 .7"/><circle cx="6" cy="6" r="3.600" fill="#8ab8f0"/><ellipse cx="5.500" cy="4.600" rx="2.600" ry="1.800" fill="#e8f4ff" opacity=".9"/></svg>
<div style="left:599px;top:54px;width:19px;height:21px;background:#fdfdfd;border:1px solid #d0d0d0;border-radius:3px;box-sizing:border-box;"></div>
<svg style="position:absolute;left:600.5px;top:56.5px" width="16" height="16" viewBox="0 0 16 16" preserveAspectRatio="none"><path d="M2.500 7.500Q2.300 4 6 4H9V1.800L13.300 5L9 8.200V6H6Q4.600 6 4.600 7.500Z" fill="#e4f6f8" stroke="#1a8090" stroke-width="1"/><path d="M13.500 8.500Q13.700 12 10 12H7V14.200L2.700 11L7 7.800V10H10Q11.400 10 11.400 8.500Z" fill="#a8d8e4" stroke="#14506a" stroke-width="1"/></svg>
<svg style="position:absolute;left:631px;top:56px" width="17" height="17" viewBox="0 0 17 17"><circle cx="8.400" cy="8.400" r="7.300" fill="#4a90e2"/><circle cx="8.400" cy="8.400" r="2.800" fill="#fff"/></svg>
<span class="t" id="t34" style="top:58.03px;font-size:12px;line-height:14px;letter-spacing:-0.170px;left:651px;">Show actual events</span>
<div style="left:760.5px;top:57px;width:14.8px;height:14.8px;border-radius:50%;background:#fff;border:1px solid #8a8a8a;box-sizing:border-box;"></div>
<span class="t" id="t35" style="top:58.03px;font-size:12px;line-height:14px;letter-spacing:-0.203px;left:780px;">Show all events</span>
<div style="left:1023px;top:61.800px;width:146px;height:4.500px;background:#1e80e8;border-radius:2.200px;overflow:hidden"><span class="t" style="left:61px;top:-5px;color:#fff;font-size:12px;line-height:14px;letter-spacing:-.5px">100 %</span></div>
<span class="t" id="t36" style="top:58.03px;font-size:12px;line-height:14px;letter-spacing:-0.152px;left:1180px;">1 / 1 Record found</span>
<div style="left:325px;top:79px;width:951px;height:161px;background:#fff;border:1px solid #c8c8c8;box-sizing:border-box;"></div>
<div style="left:326px;top:104px;width:939px;height:1px;background:#e0e0e0;"></div>
<span class="t" id="t37" style="top:86.03px;font-size:12px;line-height:14px;letter-spacing:0.000px;left:385.0px;transform:scaleX(0.8497);transform-origin:0 0;">EVENT</span>
<span class="t" id="t38" style="top:86.03px;font-size:12px;line-height:14px;letter-spacing:0.000px;left:513.0px;transform:scaleX(0.8829);transform-origin:0 0;">DEADLINE</span>
<div style="left:477px;top:80px;width:1px;height:24px;background:#e4e4e4;"></div>
<span class="t" id="t39" style="top:86.03px;font-size:12px;line-height:14px;letter-spacing:0.000px;left:637.0px;transform:scaleX(0.8437);transform-origin:0 0;">START DATE</span>
<div style="left:601px;top:80px;width:1px;height:24px;background:#e4e4e4;"></div>
<span class="t" id="t40" style="top:86.03px;font-size:12px;line-height:14px;letter-spacing:0.000px;left:770.75px;transform:scaleX(0.8816);transform-origin:0 0;">END DATE</span>
<div style="left:735px;top:80px;width:1px;height:24px;background:#e4e4e4;"></div>
<span class="t" id="t41" style="top:86.03px;font-size:12px;line-height:14px;letter-spacing:0.000px;left:894.25px;transform:scaleX(0.9015);transform-origin:0 0;">COUNTRY</span>
<div style="left:859px;top:80px;width:1px;height:24px;background:#e4e4e4;"></div>
<span class="t" id="t42" style="top:86.03px;font-size:12px;line-height:14px;letter-spacing:0.000px;left:1033.5px;transform:scaleX(0.8446);transform-origin:0 0;">ADDRESS</span>
<div style="left:982px;top:80px;width:1px;height:24px;background:#e4e4e4;"></div>
<span class="t" id="t43" style="top:86.03px;font-size:12px;line-height:14px;letter-spacing:0.000px;left:1187.0px;transform:scaleX(0.7976);transform-origin:0 0;">TYPE</span>
<div style="left:1133px;top:80px;width:1px;height:24px;background:#e4e4e4;"></div>
<div style="left:1265px;top:80px;width:1px;height:24px;background:#e4e4e4;"></div>
<div style="left:1266px;top:105px;width:9px;height:134px;background:#f4f4f4;"></div>
<svg style="position:absolute;left:1265px;top:87px" width="10" height="10" viewBox="0 0 10 10" preserveAspectRatio="none"><rect x=".5" y=".5" width="8" height="7" fill="#fff" stroke="#222" stroke-width="1"/><path d="M.5 3H8.500M3.200 .5V7.500M5.800 .5V7.500" stroke="#222" stroke-width=".9"/><path d="M4.300 6.300H10L7.150 9.800Z" fill="#111" stroke="#fff" stroke-width=".4"/></svg>
<div style="left:326px;top:105px;width:939px;height:18px;background:#a0a0ff;"></div>
<span class="t" id="t44" style="top:108.03px;font-size:12px;line-height:14px;letter-spacing:0.000px;left:327px;transform:scaleX(0.9547);transform-origin:0 0;">Knowledge Base</span>
<span class="t" id="t45" style="top:108.03px;font-size:12px;line-height:14px;letter-spacing:0.000px;left:479px;transform:scaleX(0.8824);transform-origin:0 0;">2023.12.31</span>
<span class="t" id="t46" style="top:108.03px;font-size:12px;line-height:14px;letter-spacing:0.000px;left:603px;transform:scaleX(0.8824);transform-origin:0 0;">2023.12.31</span>
<span class="t" id="t47" style="top:108.03px;font-size:12px;line-height:14px;letter-spacing:0.000px;left:737px;transform:scaleX(0.8824);transform-origin:0 0;">2023.12.31</span>
<span class="t" id="t48" style="top:108.03px;font-size:12px;line-height:14px;letter-spacing:0.000px;left:861px;transform:scaleX(0.8843);transform-origin:0 0;">AUSTRIA</span>
<span class="t" id="t49" style="top:108.03px;font-size:12px;line-height:14px;letter-spacing:0.000px;left:984px;transform:scaleX(0.9547);transform-origin:0 0;">Knowledge Base</span>
<span class="t" id="t50" style="top:108.03px;font-size:12px;line-height:14px;letter-spacing:0.030px;left:1135px;">Tournament</span>
<div style="left:322px;top:249px;width:957px;height:784px;background:#f0f0f0;border:1px solid #9a9a9a;border-right-color:#8c8c8c;border-bottom-color:#8c8c8c;box-shadow:1px 1px 0 #a8a8a8, 2px 2px 1px #c8c8c8, inset 1px 1px 0 #c4c4c4;box-sizing:border-box;"></div>
<div style="left:323px;top:250px;width:24px;height:782px;background:#f0f0f0;border-right:1px solid #b8b8b8;box-sizing:border-box;"></div>
<svg style="position:absolute;left:327.5px;top:252.5px" width="16" height="16" viewBox="0 0 16 16" preserveAspectRatio="none"><path d="M7 5.500H14.500V15H7Z" fill="#fdfdfd" stroke="#333" stroke-width="1"/><path d="M4 3H11.500V12.500H4Z" fill="#fdfdfd" stroke="#333" stroke-width="1"/><path d="M3 .5H8.500V10H.5V3Z" fill="#fff" stroke="#333" stroke-width="1"/><path d="M.5 3H3V.5" fill="#c8ccd4" stroke="#555" stroke-width=".6"/></svg>
<div style="left:347px;top:250px;width:931px;height:22px;background:linear-gradient(90deg,#2f78c4 0,#4f8ccc 25%,#86b0da 50%,#b4cee8 72%,#d4e2f0 90%,#eef2f7 100%);"></div>
<svg style="position:absolute;left:348.5px;top:253px" width="16" height="16" viewBox="0 0 16 16" preserveAspectRatio="none"><path d="M3.5 2.5V1H9.5V2.5H15.5V11H13" fill="#fff" stroke="#2f3e55" stroke-width="1"/><path d="M3 0.6H10V2.4H16V3.6H3Z" fill="#1e78e0"/><path d="M1 15.5V5H7.5V6.5H13.5V15.5H11.5V14.5H3V15.5Z" fill="#fff" stroke="#2f3e55" stroke-width="1"/><path d="M0.5 4.5H8V6H14V7.4H0.5Z" fill="#1e78e0"/><path d="M3.5 9.5H11M3.5 11.5H9" stroke="#c8ccd4" stroke-width="1"/><path d="M3.8 14H5.2M9.3 14H10.7" stroke="#556" stroke-width="1"/><g transform="translate(7.3,6.4) scale(0.6)"><path d="M3 15.500V12Q3 10 5.300 10H10.700Q13 10 13 12V15.500Z" fill="#fbfcff" stroke="#8c96a8" stroke-width=".8"/><path d="M7.400 10.500H8.600L8.900 14.500H7.100Z" fill="#2a6ad8"/><path d="M5 15.500H11" stroke="#8c96a8" stroke-width=".8"/><path d="M5.400 .6H10.600L12.800 2.800V6.200L10.400 9.700H5.600L3.200 6.200V2.800Z" fill="url(#gy)" stroke="#8a5c10" stroke-width="1"/><path d="M5.200 .2H10.800L13.100 2.600V3.700H2.900V2.600Z" fill="#1c1208"/></g></svg>
<span class="t" id="t51" style="top:255.03px;font-size:12px;line-height:14px;letter-spacing:0.000px;left:369px;transform:scaleX(0.9478);transform-origin:0 0;color:#fff;">Officials Categories, Coach, Referee, Press</span>
<svg style="position:absolute;left:1036px;top:253px" width="16" height="16" viewBox="0 0 16 16" preserveAspectRatio="none"><path d="M3.5 2.5V1H9.5V2.5H15.5V11H13" fill="#fff" stroke="#2f3e55" stroke-width="1"/><path d="M3 0.6H10V2.4H16V3.6H3Z" fill="#1e78e0"/><path d="M1 15.5V5H7.5V6.5H13.5V15.5H11.5V14.5H3V15.5Z" fill="#fff" stroke="#2f3e55" stroke-width="1"/><path d="M0.5 4.5H8V6H14V7.4H0.5Z" fill="#1e78e0"/><path d="M3.5 9.5H11M3.5 11.5H9" stroke="#c8ccd4" stroke-width="1"/><path d="M3.8 14H5.2M9.3 14H10.7" stroke="#556" stroke-width="1"/><g transform="translate(7.3,6.4) scale(0.6)"><path d="M3 15.500V12Q3 10 5.300 10H10.700Q13 10 13 12V15.500Z" fill="#fbfcff" stroke="#8c96a8" stroke-width=".8"/><path d="M7.400 10.500H8.600L8.900 14.500H7.100Z" fill="#2a6ad8"/><path d="M5 15.500H11" stroke="#8c96a8" stroke-width=".8"/><path d="M5.400 .6H10.600L12.800 2.800V6.200L10.400 9.700H5.600L3.200 6.200V2.800Z" fill="url(#gy)" stroke="#8a5c10" stroke-width="1"/><path d="M5.200 .2H10.800L13.100 2.600V3.700H2.900V2.600Z" fill="#1c1208"/></g></svg>
<svg style="position:absolute;left:1059px;top:253px" width="16" height="16" viewBox="0 0 16 16" preserveAspectRatio="none"><rect x=".7" y="2.2" width="10.6" height="11.6" fill="url(#gc)" stroke="#a86a00" stroke-width="1.4"/><rect x="2" y="3.5" width="2" height="9" fill="#ffe45a"/><path d="M3.5 4V2.2Q3.5 1 6 0.6Q8.5 1 8.5 2.2V4Z" fill="#e8eef6" stroke="#5a6678" stroke-width="1"/><path d="M6.5 5.5H12.5L15.5 8.5V15.5H6.5Z" fill="#fdfdff" stroke="#3a4458" stroke-width="1"/><path d="M12.5 5.5V8.5H15.5" fill="#cfd4e8" stroke="#3a4458" stroke-width=".8"/><g transform="translate(7.8,6.4) scale(0.6)"><path d="M3 15.500V12Q3 10 5.300 10H10.700Q13 10 13 12V15.500Z" fill="#fbfcff" stroke="#8c96a8" stroke-width=".8"/><path d="M7.400 10.500H8.600L8.900 14.500H7.100Z" fill="#2a6ad8"/><path d="M5 15.500H11" stroke="#8c96a8" stroke-width=".8"/><path d="M5.400 .6H10.600L12.800 2.800V6.200L10.400 9.700H5.600L3.200 6.200V2.800Z" fill="url(#gy)" stroke="#8a5c10" stroke-width="1"/><path d="M5.200 .2H10.800L13.100 2.600V3.700H2.900V2.600Z" fill="#1c1208"/></g></svg>
<svg style="position:absolute;left:1083px;top:253px" width="16" height="16" viewBox="0 0 16 16" preserveAspectRatio="none"><path d="M3.5 2.5V1H9.5V2.5H15.5V11H13" fill="#fff" stroke="#2f3e55" stroke-width="1"/><path d="M3 0.6H10V2.4H16V3.6H3Z" fill="#1e78e0"/><path d="M1 15.5V5H7.5V6.5H13.5V15.5H11.5V14.5H3V15.5Z" fill="#fff" stroke="#2f3e55" stroke-width="1"/><path d="M0.5 4.5H8V6H14V7.4H0.5Z" fill="#1e78e0"/><path d="M3.5 9.5H11M3.5 11.5H9" stroke="#c8ccd4" stroke-width="1"/><path d="M3.8 14H5.2M9.3 14H10.7" stroke="#556" stroke-width="1"/><g transform="translate(7.3,6.4) scale(0.6)"><path d="M2.800 15.200V12Q2.800 9.800 5.300 9.800H10.700Q13.200 9.800 13.200 12V15.200Q8 16.600 2.800 15.200Z" fill="#e8281e"/><path d="M6.200 10.300H9.800L9.300 15.600H6.700Z" fill="#fff"/><path d="M7.600 11V15.600" stroke="#e8281e" stroke-width=".5"/><path d="M4.600 12V15.400" stroke="#ffd0c8" stroke-width=".8"/><path d="M5.400 .6H10.600L12.800 2.800V6.200L10.400 9.700H5.600L3.200 6.200V2.800Z" fill="url(#gy)" stroke="#8a5c10" stroke-width="1"/></g></svg>
<svg style="position:absolute;left:1106px;top:253px" width="16" height="16" viewBox="0 0 16 16" preserveAspectRatio="none"><rect x=".7" y="2.2" width="10.6" height="11.6" fill="url(#gc)" stroke="#a86a00" stroke-width="1.4"/><rect x="2" y="3.5" width="2" height="9" fill="#ffe45a"/><path d="M3.5 4V2.2Q3.5 1 6 0.6Q8.5 1 8.5 2.2V4Z" fill="#e8eef6" stroke="#5a6678" stroke-width="1"/><path d="M6.5 5.5H12.5L15.5 8.5V15.5H6.5Z" fill="#fdfdff" stroke="#3a4458" stroke-width="1"/><path d="M12.5 5.5V8.5H15.5" fill="#cfd4e8" stroke="#3a4458" stroke-width=".8"/><g transform="translate(7.8,6.4) scale(0.6)"><path d="M2.800 15.200V12Q2.800 9.800 5.300 9.800H10.700Q13.200 9.800 13.200 12V15.200Q8 16.600 2.800 15.200Z" fill="#e8281e"/><path d="M6.200 10.300H9.800L9.300 15.600H6.700Z" fill="#fff"/><path d="M7.600 11V15.600" stroke="#e8281e" stroke-width=".5"/><path d="M4.600 12V15.400" stroke="#ffd0c8" stroke-width=".8"/><path d="M5.400 .6H10.600L12.800 2.800V6.200L10.400 9.700H5.600L3.200 6.200V2.800Z" fill="url(#gy)" stroke="#8a5c10" stroke-width="1"/></g></svg>
<svg style="position:absolute;left:1130px;top:253px" width="16" height="16" viewBox="0 0 16 16" preserveAspectRatio="none"><path d="M3.5 2.5V1H9.5V2.5H15.5V11H13" fill="#fff" stroke="#2f3e55" stroke-width="1"/><path d="M3 0.6H10V2.4H16V3.6H3Z" fill="#1e78e0"/><path d="M1 15.5V5H7.5V6.5H13.5V15.5H11.5V14.5H3V15.5Z" fill="#fff" stroke="#2f3e55" stroke-width="1"/><path d="M0.5 4.5H8V6H14V7.4H0.5Z" fill="#1e78e0"/><path d="M3.5 9.5H11M3.5 11.5H9" stroke="#c8ccd4" stroke-width="1"/><path d="M3.8 14H5.2M9.3 14H10.7" stroke="#556" stroke-width="1"/><g transform="translate(7.3,6.4) scale(0.6)"><path d="M2.800 16V12Q2.800 9.800 5.300 9.800H10.700Q13.200 9.800 13.200 12V16Z" fill="#3a4048"/><path d="M6.600 10H9.400L8.700 16H7.300Z" fill="#e8f0ff"/><path d="M7.500 11.500H8.500L8.700 16H7.300Z" fill="#2a7ae8"/><path d="M5.400 .6H10.600L12.800 2.800V6.200L10.400 9.700H5.600L3.200 6.200V2.800Z" fill="url(#gy)" stroke="#8a5c10" stroke-width="1"/><path d="M5.200 .2H10.800L13.100 2.600V3.700H2.900V2.600Z" fill="#1c1208"/></g></svg>
<svg style="position:absolute;left:1153px;top:253px" width="16" height="16" viewBox="0 0 16 16" preserveAspectRatio="none"><rect x=".7" y="2.2" width="10.6" height="11.6" fill="url(#gc)" stroke="#a86a00" stroke-width="1.4"/><rect x="2" y="3.5" width="2" height="9" fill="#ffe45a"/><path d="M3.5 4V2.2Q3.5 1 6 0.6Q8.5 1 8.5 2.2V4Z" fill="#e8eef6" stroke="#5a6678" stroke-width="1"/><path d="M6.5 5.5H12.5L15.5 8.5V15.5H6.5Z" fill="#fdfdff" stroke="#3a4458" stroke-width="1"/><path d="M12.5 5.5V8.5H15.5" fill="#cfd4e8" stroke="#3a4458" stroke-width=".8"/><g transform="translate(7.8,6.4) scale(0.6)"><path d="M2.800 16V12Q2.800 9.800 5.300 9.800H10.700Q13.200 9.800 13.200 12V16Z" fill="#3a4048"/><path d="M6.600 10H9.400L8.700 16H7.300Z" fill="#e8f0ff"/><path d="M7.500 11.500H8.500L8.700 16H7.300Z" fill="#2a7ae8"/><path d="M5.400 .6H10.600L12.800 2.800V6.200L10.400 9.700H5.600L3.200 6.200V2.800Z" fill="url(#gy)" stroke="#8a5c10" stroke-width="1"/><path d="M5.200 .2H10.800L13.100 2.600V3.700H2.900V2.600Z" fill="#1c1208"/></g></svg>
<div style="left:1079px;top:251px;width:1px;height:20px;background:#b4cce6;"></div>
<div style="left:1126px;top:251px;width:1px;height:20px;background:#c4d8ec;"></div>
<div style="left:1173px;top:251px;width:1px;height:20px;background:#d0e0f0;"></div>
<div style="left:1203px;top:251px;width:1px;height:20px;background:#d8e4f2;"></div>
<div style="left:1231px;top:251px;width:1px;height:20px;background:#dce8f4;"></div>
<svg style="position:absolute;left:1178px;top:253px" width="21" height="16" viewBox="0 0 16 16" preserveAspectRatio="none"><circle cx="3.500" cy="6" r="2.200" fill="#777"/><path d="M0 13Q0 8.500 3.500 8.500Q7 8.500 7 13Z" fill="#777"/><circle cx="12.500" cy="6" r="2.200" fill="#777"/><path d="M9 13Q9 8.500 12.500 8.500Q16 8.500 16 13Z" fill="#777"/><circle cx="8" cy="4.500" r="3" fill="#f0a030"/><path d="M2.500 14.500Q2.500 8 8 8Q13.500 8 13.500 14.500Z" fill="#f09020"/></svg>
<svg style="position:absolute;left:1208px;top:253px" width="19" height="16" viewBox="0 0 16 16" preserveAspectRatio="none"><rect x=".6" y="1" width="14.8" height="14" fill="#eef4fc" stroke="#9ab8e0" stroke-width="1"/><rect x="1.5" y="2" width="13" height="3" fill="#a8c4ea"/><path d="M2.5 3.5H13.5" stroke="#fff" stroke-width="1" stroke-dasharray="1.5 1"/><rect x="1.8" y="6.2" width="3.4" height="8" fill="#8db0e2"/><rect x="6.2" y="6.2" width="3.6" height="5" fill="#fff" stroke="#7da0d8" stroke-width=".8"/><rect x="10.8" y="6.2" width="3.4" height="8" fill="#8db0e2"/><path d="M1.8 8.5H5.2M1.8 11H5.2M10.8 8.5H14.2M10.8 11H14.2M6.2 13H9.8" stroke="#fff" stroke-width=".8"/></svg>
<svg style="position:absolute;left:1236px;top:253px" width="16" height="16" viewBox="0 0 16 16" preserveAspectRatio="none"><rect x=".7" y="1.7" width="14.6" height="12.6" fill="#fff" stroke="#000" stroke-width="1.4"/><rect x="1.4" y="2.4" width="13.2" height="2.2" fill="#c050ff"/><path d="M1 5.2H15" stroke="#000" stroke-width="1"/></svg>
<svg style="position:absolute;left:1258px;top:253px" width="15" height="15" viewBox="0 0 16 16" preserveAspectRatio="none"><path d="M4 4L12 12M12 4L4 12" stroke="#f01010" stroke-width="2" stroke-linecap="round"/></svg>
<div style="left:347px;top:272px;width:931px;height:32px;background:#f0f0f0;"></div>
<div style="left:347px;top:304px;width:931px;height:1px;background:#c4c4c4;"></div>
<div style="left:435px;top:272px;width:79px;height:30px;background:#e0e0e0;"></div>
<div style="left:435px;top:301px;width:79px;height:3px;background:#3b7bd0;"></div>
<div style="left:434px;top:276px;width:1px;height:22px;background:#d4d4d4;"></div>
<div style="left:514px;top:276px;width:1px;height:22px;background:#d4d4d4;"></div>
<div style="left:597px;top:276px;width:1px;height:22px;background:#d4d4d4;"></div>
<svg style="position:absolute;left:361px;top:280px" width="12" height="16" viewBox="2 0 12 16" preserveAspectRatio="none"><path d="M3 15.500V12Q3 10 5.300 10H10.700Q13 10 13 12V15.500Z" fill="#fbfcff" stroke="#8c96a8" stroke-width=".8"/><path d="M7.400 10.500H8.600L8.900 14.500H7.100Z" fill="#2a6ad8"/><path d="M5 15.500H11" stroke="#8c96a8" stroke-width=".8"/><path d="M5.400 .6H10.600L12.800 2.800V6.200L10.400 9.700H5.600L3.200 6.200V2.800Z" fill="url(#gy)" stroke="#8a5c10" stroke-width="1"/><path d="M5.200 .2H10.800L13.100 2.600V3.700H2.900V2.600Z" fill="#1c1208"/></svg>
<span class="t" id="t52" style="top:282.03px;font-size:12px;line-height:14px;letter-spacing:-0.021px;left:380.5px;">Officials</span>
<svg style="position:absolute;left:449px;top:280px" width="12" height="16" viewBox="2 0 12 16" preserveAspectRatio="none"><path d="M2.800 15.200V12Q2.800 9.800 5.300 9.800H10.700Q13.200 9.800 13.200 12V15.200Q8 16.600 2.800 15.200Z" fill="#e8281e"/><path d="M6.200 10.300H9.800L9.300 15.600H6.700Z" fill="#fff"/><path d="M7.600 11V15.600" stroke="#e8281e" stroke-width=".5"/><path d="M4.600 12V15.400" stroke="#ffd0c8" stroke-width=".8"/><path d="M5.400 .6H10.600L12.800 2.800V6.200L10.400 9.700H5.600L3.200 6.200V2.800Z" fill="url(#gy)" stroke="#8a5c10" stroke-width="1"/></svg>
<span class="t" id="t53" style="top:282.03px;font-size:12px;line-height:14px;letter-spacing:-0.138px;left:468px;">Coach</span>
<svg style="position:absolute;left:528px;top:280px" width="12" height="16" viewBox="2 0 12 16" preserveAspectRatio="none"><path d="M2.800 16V12Q2.800 9.800 5.300 9.800H10.700Q13.200 9.800 13.200 12V16Z" fill="#3a4048"/><path d="M6.600 10H9.400L8.700 16H7.300Z" fill="#e8f0ff"/><path d="M7.500 11.500H8.500L8.700 16H7.300Z" fill="#2a7ae8"/><path d="M5.400 .6H10.600L12.800 2.800V6.200L10.400 9.700H5.600L3.200 6.200V2.800Z" fill="url(#gy)" stroke="#8a5c10" stroke-width="1"/><path d="M5.200 .2H10.800L13.100 2.600V3.700H2.900V2.600Z" fill="#1c1208"/></svg>
<span class="t" id="t54" style="top:282.03px;font-size:12px;line-height:14px;letter-spacing:0.000px;left:547px;transform:scaleX(0.9133);transform-origin:0 0;">Referee</span>
<svg style="position:absolute;left:609.5px;top:280.5px" width="20" height="16" viewBox="0 0 16 16" preserveAspectRatio="none"><rect x=".6" y="1" width="14.8" height="14" fill="#eef4fc" stroke="#9ab8e0" stroke-width="1"/><rect x="1.5" y="2" width="13" height="3" fill="#a8c4ea"/><path d="M2.5 3.5H13.5" stroke="#fff" stroke-width="1" stroke-dasharray="1.5 1"/><rect x="1.8" y="6.2" width="3.4" height="8" fill="#8db0e2"/><rect x="6.2" y="6.2" width="3.6" height="5" fill="#fff" stroke="#7da0d8" stroke-width=".8"/><rect x="10.8" y="6.2" width="3.4" height="8" fill="#8db0e2"/><path d="M1.8 8.5H5.2M1.8 11H5.2M10.8 8.5H14.2M10.8 11H14.2M6.2 13H9.8" stroke="#fff" stroke-width=".8"/></svg>
<span class="t" id="t55" style="top:282.03px;font-size:12px;line-height:14px;letter-spacing:0.000px;left:634px;transform:scaleX(0.8798);transform-origin:0 0;">Press</span>
<svg style="position:absolute;left:607px;top:310px" width="12" height="16" viewBox="2 0 12 16" preserveAspectRatio="none"><path d="M2.800 15.200V12Q2.800 9.800 5.300 9.800H10.700Q13.200 9.800 13.200 12V15.200Q8 16.600 2.800 15.200Z" fill="#e8281e"/><path d="M6.200 10.300H9.800L9.300 15.600H6.700Z" fill="#fff"/><path d="M7.600 11V15.600" stroke="#e8281e" stroke-width=".5"/><path d="M4.600 12V15.400" stroke="#ffd0c8" stroke-width=".8"/><path d="M5.400 .6H10.600L12.800 2.800V6.200L10.400 9.700H5.600L3.200 6.200V2.800Z" fill="url(#gy)" stroke="#8a5c10" stroke-width="1"/></svg>
<span class="t" id="t56" style="top:312.03px;font-size:12px;line-height:14px;letter-spacing:-0.135px;left:625.5px;">Registered coaches without category: 1</span>
<div style="left:838px;top:308px;width:22px;height:21px;background:#fdfdfd;border:1px solid #d0d0d0;border-radius:3px;box-sizing:border-box;"></div>
<svg style="position:absolute;left:841px;top:310.5px" width="16" height="16" viewBox="0 0 16 16" preserveAspectRatio="none"><rect x=".7" y="2.2" width="10.6" height="11.6" fill="url(#gc)" stroke="#a86a00" stroke-width="1.4"/><rect x="2" y="3.5" width="2" height="9" fill="#ffe45a"/><path d="M3.5 4V2.2Q3.5 1 6 0.6Q8.5 1 8.5 2.2V4Z" fill="#e8eef6" stroke="#5a6678" stroke-width="1"/><path d="M6.5 5.5H12.5L15.5 8.5V15.5H6.5Z" fill="#fdfdff" stroke="#3a4458" stroke-width="1"/><path d="M12.5 5.5V8.5H15.5" fill="#cfd4e8" stroke="#3a4458" stroke-width=".8"/><g transform="translate(7.8,6.4) scale(0.6)"><path d="M2.800 15.200V12Q2.800 9.800 5.300 9.800H10.700Q13.200 9.800 13.200 12V15.200Q8 16.600 2.800 15.200Z" fill="#e8281e"/><path d="M6.200 10.300H9.800L9.300 15.600H6.700Z" fill="#fff"/><path d="M7.600 11V15.600" stroke="#e8281e" stroke-width=".5"/><path d="M4.600 12V15.400" stroke="#ffd0c8" stroke-width=".8"/><path d="M5.400 .6H10.600L12.800 2.800V6.200L10.400 9.700H5.600L3.200 6.200V2.800Z" fill="url(#gy)" stroke="#8a5c10" stroke-width="1"/></g></svg>
<span class="t" id="t57" style="top:312.03px;font-size:12px;line-height:14px;letter-spacing:0.011px;left:862.5px;">Limit / Team:</span>
<div style="left:939px;top:308px;width:46px;height:21px;background:#fff;border:1px solid #c2c2c2;box-sizing:border-box;"></div>
<span class="t" id="t58" style="top:312.03px;font-size:12px;line-height:14px;letter-spacing:-0.100px;left:946px;">0</span>
<div style="left:994px;top:308px;width:22px;height:21px;background:#fdfdfd;border:1px solid #d0d0d0;border-radius:3px;box-sizing:border-box;"></div>
<svg style="position:absolute;left:998px;top:311px" width="14" height="14" viewBox="0 0 16 16" preserveAspectRatio="none"><rect x=".8" y=".8" width="14.4" height="14.4" rx="1" fill="#3a4a9a" stroke="#26306a" stroke-width="1"/><rect x="3" y="1.2" width="10" height="5.6" fill="#fff"/><rect x="3" y="1.2" width="10" height="1.6" fill="#e8404a"/><rect x="4" y="9.5" width="8" height="5" fill="#c8ccd8"/><rect x="9" y="10.5" width="2" height="3.2" fill="#3a4a9a"/></svg>
<div style="left:349px;top:333px;width:234px;height:22px;background:#fff;border:1px solid #c2c2c2;box-sizing:border-box;"></div>
<div style="left:587.5px;top:333px;width:21.5px;height:22px;background:#fdfdfd;border:1px solid #d0d0d0;border-radius:3px;box-sizing:border-box;"></div>
<svg style="position:absolute;left:589.5px;top:335px" width="16" height="16" viewBox="0 0 16 16" preserveAspectRatio="none"><path d="M9.300 9.300L14 14" stroke="#a87010" stroke-width="3" stroke-linecap="round"/><path d="M9.800 9.800L14 14" stroke="#f4c040" stroke-width="1.600" stroke-linecap="round"/><circle cx="6" cy="6" r="4.500" fill="#a8ccf4" stroke="#667" stroke-width="1.100" stroke-dasharray="1.600 .7"/><circle cx="6" cy="6" r="3.600" fill="#8ab8f0"/><ellipse cx="5.500" cy="4.600" rx="2.600" ry="1.800" fill="#e8f4ff" opacity=".9"/></svg>
<div style="left:623px;top:333px;width:19px;height:22px;background:#fdfdfd;border:1px solid #d0d0d0;border-radius:3px;box-sizing:border-box;"></div>
<svg style="position:absolute;left:624.5px;top:336px" width="16" height="16" viewBox="0 0 16 16" preserveAspectRatio="none"><path d="M2.500 7.500Q2.300 4 6 4H9V1.800L13.300 5L9 8.200V6H6Q4.600 6 4.600 7.500Z" fill="#e4f6f8" stroke="#1a8090" stroke-width="1"/><path d="M13.500 8.500Q13.700 12 10 12H7V14.200L2.700 11L7 7.800V10H10Q11.400 10 11.400 8.500Z" fill="#a8d8e4" stroke="#14506a" stroke-width="1"/></svg>
<div style="left:656px;top:333px;width:22px;height:22px;background:#fdfdfd;border:1px solid #d0d0d0;border-radius:3px;box-sizing:border-box;"></div>
<svg style="position:absolute;left:660px;top:337px" width="14" height="14" viewBox="0 0 16 16" preserveAspectRatio="none"><rect x=".8" y=".8" width="14.4" height="14.4" rx="1" fill="#3a4a9a" stroke="#26306a" stroke-width="1"/><rect x="3" y="1.2" width="10" height="5.6" fill="#fff"/><rect x="3" y="1.2" width="10" height="1.6" fill="#e8404a"/><rect x="4" y="9.5" width="8" height="5" fill="#c8ccd8"/><rect x="9" y="10.5" width="2" height="3.2" fill="#3a4a9a"/></svg>
<div style="left:1018px;top:341.600px;width:146px;height:4.500px;background:#1e80e8;border-radius:2.200px;overflow:hidden"><span class="t" style="left:61px;top:-5px;color:#fff;font-size:12px;line-height:14px;letter-spacing:-.5px">100 %</span></div>
<span class="t" id="t59" style="top:338.03px;font-size:12px;line-height:14px;letter-spacing:-0.144px;left:1174px;">0 / 0 Records found</span>
<div style="left:349px;top:359px;width:927px;height:646px;background:#fff;border:1px solid #c8c8c8;box-sizing:border-box;"></div>
<div style="left:350px;top:384px;width:915px;height:1px;background:#e0e0e0;"></div>
<div style="left:584px;top:360px;width:1px;height:24px;background:#e4e4e4;"></div>
<div style="left:803px;top:360px;width:1px;height:24px;background:#e4e4e4;"></div>
<div style="left:1008px;top:360px;width:1px;height:24px;background:#e4e4e4;"></div>
<div style="left:1265px;top:360px;width:1px;height:24px;background:#e4e4e4;"></div>
<span class="t" id="t60" style="top:366.03px;font-size:12px;line-height:14px;letter-spacing:0.000px;left:438.5px;transform:scaleX(0.8613);transform-origin:0 0;">CATEGORY</span>
<span class="t" id="t61" style="top:366.03px;font-size:12px;line-height:14px;letter-spacing:0.000px;left:673.0px;transform:scaleX(0.8267);transform-origin:0 0;">ENTRIES</span>
<span class="t" id="t62" style="top:366.03px;font-size:12px;line-height:14px;letter-spacing:0.000px;left:891.75px;transform:scaleX(0.9618);transform-origin:0 0;">LIMIT</span>
<span class="t" id="t63" style="top:366.03px;font-size:12px;line-height:14px;letter-spacing:0.000px;left:1097.25px;transform:scaleX(0.8280);transform-origin:0 0;">ENTRY FEE EUR</span>
<div style="left:1266px;top:385px;width:9px;height:619px;background:#f4f4f4;"></div>
<svg style="position:absolute;left:1265px;top:367px" width="10" height="10" viewBox="0 0 10 10" preserveAspectRatio="none"><rect x=".5" y=".5" width="8" height="7" fill="#fff" stroke="#222" stroke-width="1"/><path d="M.5 3H8.500M3.200 .5V7.500M5.800 .5V7.500" stroke="#222" stroke-width=".9"/><path d="M4.300 6.300H10L7.150 9.800Z" fill="#111" stroke="#fff" stroke-width=".4"/></svg>
<svg style="position:absolute;left:327px;top:1012px" width="16" height="16" viewBox="0 0 16 16" preserveAspectRatio="none"><rect x=".7" y="1.7" width="14.6" height="12.6" fill="#fff" stroke="#000" stroke-width="1.4"/><rect x="1.4" y="2.4" width="13.2" height="2.2" fill="#c050ff"/><path d="M1 5.2H15" stroke="#000" stroke-width="1"/></svg>
<svg style="position:absolute;left:351px;top:1012px" width="16" height="16" viewBox="0 0 16 16" preserveAspectRatio="none"><path d="M3.5 2.5V1H9.5V2.5H15.5V11H13" fill="#fff" stroke="#2f3e55" stroke-width="1"/><path d="M3 0.6H10V2.4H16V3.6H3Z" fill="#1e78e0"/><path d="M1 15.5V5H7.5V6.5H13.5V15.5H11.5V14.5H3V15.5Z" fill="#fff" stroke="#2f3e55" stroke-width="1"/><path d="M0.5 4.5H8V6H14V7.4H0.5Z" fill="#1e78e0"/><path d="M3.5 9.5H11M3.5 11.5H9" stroke="#c8ccd4" stroke-width="1"/><path d="M3.8 14H5.2M9.3 14H10.7" stroke="#556" stroke-width="1"/></svg>
<span class="t" id="t64" style="top:1014.03px;font-size:12px;line-height:14px;letter-spacing:-0.003px;left:374px;">Competitor Categories</span>
<div style="left:498px;top:1011px;width:1px;height:19px;background:#d0d0d0;"></div>
<div style="left:502px;top:1009px;width:252px;height:22px;background:#d0d0d0;"></div>
<svg style="position:absolute;left:505px;top:1012px" width="16" height="16" viewBox="0 0 16 16" preserveAspectRatio="none"><path d="M3.5 2.5V1H9.5V2.5H15.5V11H13" fill="#fff" stroke="#2f3e55" stroke-width="1"/><path d="M3 0.6H10V2.4H16V3.6H3Z" fill="#1e78e0"/><path d="M1 15.5V5H7.5V6.5H13.5V15.5H11.5V14.5H3V15.5Z" fill="#fff" stroke="#2f3e55" stroke-width="1"/><path d="M0.5 4.5H8V6H14V7.4H0.5Z" fill="#1e78e0"/><path d="M3.5 9.5H11M3.5 11.5H9" stroke="#c8ccd4" stroke-width="1"/><path d="M3.8 14H5.2M9.3 14H10.7" stroke="#556" stroke-width="1"/><g transform="translate(7.3,6.4) scale(0.6)"><path d="M3 15.500V12Q3 10 5.300 10H10.700Q13 10 13 12V15.500Z" fill="#fbfcff" stroke="#8c96a8" stroke-width=".8"/><path d="M7.400 10.500H8.600L8.900 14.500H7.100Z" fill="#2a6ad8"/><path d="M5 15.500H11" stroke="#8c96a8" stroke-width=".8"/><path d="M5.400 .6H10.600L12.800 2.800V6.200L10.400 9.700H5.600L3.200 6.200V2.800Z" fill="url(#gy)" stroke="#8a5c10" stroke-width="1"/><path d="M5.200 .2H10.800L13.100 2.600V3.700H2.900V2.600Z" fill="#1c1208"/></g></svg>
<span class="t" id="t65" style="top:1014.03px;font-size:12px;line-height:14px;letter-spacing:0.000px;left:528px;transform:scaleX(0.9478);transform-origin:0 0;">Officials Categories, Coach, Referee, Press</span>
<svg style="position:absolute;left:760px;top:1011px" width="15" height="16" viewBox="0 0 16 16" preserveAspectRatio="none"><circle cx="9.5" cy="2.3" r="1.7" fill="#777"/><path d="M4 6.5L8 4.5L10 8L13.5 8.5M8 4.5L7.5 9.5L4.5 11.5L2 15M7.5 9.5L10.5 12L10 15.5" fill="none" stroke="#777" stroke-width="1.5" stroke-linecap="round" stroke-linejoin="round"/></svg>
<span class="t" id="t66" style="top:1014.03px;font-size:12px;line-height:14px;letter-spacing:-0.002px;left:782px;">Welcome</span>
<div style="left:838px;top:1011px;width:1px;height:19px;background:#d0d0d0;"></div>
<div style="left:0px;top:1040px;width:1279px;height:136px;background:#f0f0f0;border:1px solid #9a9a9a;border-right-color:#8c8c8c;border-bottom-color:#8c8c8c;box-shadow:1px 1px 0 #a8a8a8, 2px 2px 1px #c8c8c8, inset 1px 1px 0 #c4c4c4;box-sizing:border-box;"></div>
<div style="left:1px;top:1041px;width:1277px;height:22px;background:linear-gradient(90deg,#fff 0,#fbfbfb 30%,#f2f2f2 100%);"></div>
<svg style="position:absolute;left:2px;top:1043.5px" width="16" height="16" viewBox="0 0 16 16" preserveAspectRatio="none"><rect x=".5" y="1.5" width="15" height="13" rx="1" fill="#1e2a3a" stroke="#556" stroke-width="1"/><rect x="1" y="2" width="14" height="2" fill="#6a9ad8"/><path d="M3 6.5L5 8L3 9.5" fill="none" stroke="#fff" stroke-width=".9"/></svg>
<span class="t" id="t67" style="top:1045.03px;font-size:12px;line-height:14px;letter-spacing:0.000px;left:23px;transform:scaleX(0.9577);transform-origin:0 0;">Message Console</span>
<svg style="position:absolute;left:1236px;top:1043px" width="15" height="16" viewBox="0 0 16 16" preserveAspectRatio="none"><path d="M3.5 5H12.5L11.8 15.2H4.2Z" fill="#d8dce4" stroke="#667" stroke-width="1"/><rect x="2.5" y="3" width="11" height="2" rx=".6" fill="#c4c8d0" stroke="#667" stroke-width=".9"/><path d="M6.3 3V1.5H9.7V3" fill="none" stroke="#667" stroke-width="1"/><path d="M6 7V13.5M8 7V13.5M10 7V13.5" stroke="#889" stroke-width=".9"/></svg>
<svg style="position:absolute;left:1258px;top:1043px" width="16" height="16" viewBox="0 0 16 16" preserveAspectRatio="none"><rect x=".7" y="1.7" width="14.6" height="12.6" fill="#fff" stroke="#000" stroke-width="1.4"/><rect x="1.4" y="2.4" width="13.2" height="2.2" fill="#c050ff"/><path d="M1 5.2H15" stroke="#000" stroke-width="1"/></svg>
<div style="left:3px;top:1064px;width:1273px;height:108px;background:#f2f2f2;border:1px solid #c4c4c4;box-sizing:border-box;"></div>
<div style="left:1285px;top:28px;width:432px;height:1148px;background:#f0f0f0;border:1px solid #9a9a9a;border-right-color:#8c8c8c;border-bottom-color:#8c8c8c;box-shadow:1px 1px 0 #a8a8a8, 2px 2px 1px #c8c8c8, inset 1px 1px 0 #c4c4c4;box-sizing:border-box;"></div>
<div style="left:1287px;top:30px;width:23px;height:1145px;background:#f1f1f1;border-right:1px solid #bcbcbc;box-sizing:border-box;"></div>
<svg style="position:absolute;left:1290.5px;top:31.5px" width="16" height="16" viewBox="0 0 16 16" preserveAspectRatio="none"><path d="M7 5.500H14.500V15H7Z" fill="#fdfdfd" stroke="#333" stroke-width="1"/><path d="M4 3H11.500V12.500H4Z" fill="#fdfdfd" stroke="#333" stroke-width="1"/><path d="M3 .5H8.500V10H.5V3Z" fill="#fff" stroke="#333" stroke-width="1"/><path d="M.5 3H3V.5" fill="#c8ccd4" stroke="#555" stroke-width=".6"/></svg>
<div style="left:1310px;top:30px;width:406px;height:22px;background:linear-gradient(90deg,#fff 0,#f6f6f6 40%,#f2f2f2 100%);"></div>
<svg style="position:absolute;left:1311px;top:32px" width="16" height="16" viewBox="0 0 16 16" preserveAspectRatio="none"><rect x=".8" y="5.200" width="14.400" height="10.300" fill="#fff" stroke="#5a6478" stroke-width="1"/><path d="M1 8.800H15M1 12.200H15M5.500 5.200V15.500M10.500 8.800V15.500" stroke="#a4b0c4" stroke-width=".8"/><rect x=".5" y="2.300" width="4.800" height="3.600" fill="#1c64d8"/><rect x="1" y="3" width="3.800" height="1" fill="#8cc0ff"/><circle cx="11" cy="4.800" r="4.700" fill="#3cc43c" stroke="#1c8c1c" stroke-width="1"/><rect x="8.300" y="2.300" width="5.400" height="5" rx=".6" fill="#0c6c0c"/><path d="M9.200 4.300L10.700 6.200L12.900 3" fill="none" stroke="#fff" stroke-width="1.300"/></svg>
<span class="t" id="t68" style="top:34.03px;font-size:12px;line-height:14px;letter-spacing:-0.056px;left:1332px;">Main data / Entries</span>
<svg style="position:absolute;left:1675px;top:32px" width="16" height="16" viewBox="0 0 16 16" preserveAspectRatio="none"><rect x=".7" y="1.7" width="14.6" height="12.6" fill="#fff" stroke="#000" stroke-width="1.4"/><rect x="1.4" y="2.4" width="13.2" height="2.2" fill="#c050ff"/><path d="M1 5.2H15" stroke="#000" stroke-width="1"/></svg>
<svg style="position:absolute;left:1697px;top:32px" width="15" height="15" viewBox="0 0 16 16" preserveAspectRatio="none"><path d="M4 4L12 12M12 4L4 12" stroke="#f01010" stroke-width="2" stroke-linecap="round"/></svg>
<div style="left:1312px;top:53px;width:403px;height:1095px;background:#fff;border:1px solid #c4c4c4;box-sizing:border-box;"></div>
<div style="left:1704px;top:54px;width:10px;height:1093px;background:#eeeeee;"></div>
<div style="left:1704px;top:54px;width:10px;height:962px;background:#d2d2d2;"></div>
<div style="left:1323px;top:64px;width:371px;height:25px;background:linear-gradient(90deg,#e0e2e7 0,#e6e7ea 50%,#f0f0f0 100%);"></div>
<div style="left:1323px;top:64px;width:2px;height:1px;background:#4a7ad8;"></div>
<div style="left:1692px;top:64px;width:2px;height:1px;background:#4a7ad8;"></div>
<span class="t" id="t69" style="top:70.03px;font-size:12px;line-height:14px;letter-spacing:-0.149px;left:1334px;font-weight:bold;">Main data</span>
<svg style="position:absolute;left:1669px;top:68px" width="16" height="16" viewBox="0 0 16 16"><circle cx="8" cy="8" r="7.300" fill="#e0e1e5" stroke="#a8a8a8" stroke-width="1"/><path d="M4.800 7.300L8 4.300L11.200 7.300M4.800 11.300L8 8.300L11.200 11.300" fill="none" stroke="#222" stroke-width="1.300"/></svg>
<div style="left:1323px;top:89px;width:371px;height:182.5px;background:#f2f2f2;border:1px solid #ababab;border-top:none;box-sizing:border-box;"></div>
<svg style="position:absolute;left:1336px;top:99px" width="14" height="16" viewBox="1 0 14 16" preserveAspectRatio="none"><path d="M2 15V12Q2 10 4.500 10H11.500Q14 10 14 12V15" fill="#fff" stroke="#111" stroke-width="1"/><path d="M2.500 13.500H13.500" stroke="#111" stroke-width="1.300"/><path d="M6.300 15.600L8 12.600L9.700 15.600Z" fill="#111"/><circle cx="3.200" cy="15.300" r=".6" fill="#111"/><circle cx="12.800" cy="15.300" r=".6" fill="#111"/><path d="M5.400 .6H10.600L12.800 2.800V6.200L10.400 9.700H5.600L3.200 6.200V2.800Z" fill="url(#gy)" stroke="#8a5c10" stroke-width="1"/></svg>
<span class="t" id="t70" style="top:101.03px;font-size:12px;line-height:14px;letter-spacing:0.074px;left:1355.5px;">Competitors</span>
<svg style="position:absolute;left:1337px;top:117px" width="12" height="16" viewBox="2 0 12 16" preserveAspectRatio="none"><path d="M2.800 15.200V12Q2.800 9.800 5.300 9.800H10.700Q13.200 9.800 13.200 12V15.200Q8 16.600 2.800 15.200Z" fill="#e8281e"/><path d="M6.200 10.300H9.800L9.300 15.600H6.700Z" fill="#fff"/><path d="M7.600 11V15.600" stroke="#e8281e" stroke-width=".5"/><path d="M4.600 12V15.400" stroke="#ffd0c8" stroke-width=".8"/><path d="M5.400 .6H10.600L12.800 2.800V6.200L10.400 9.700H5.600L3.200 6.200V2.800Z" fill="url(#gy)" stroke="#8a5c10" stroke-width="1"/></svg>
<span class="t" id="t71" style="top:119.03px;font-size:12px;line-height:14px;letter-spacing:0.000px;left:1355.5px;transform:scaleX(0.9393);transform-origin:0 0;">Coaches</span>
<svg style="position:absolute;left:1337px;top:135px" width="12" height="16" viewBox="2 0 12 16" preserveAspectRatio="none"><path d="M2.800 16V12Q2.800 9.800 5.300 9.800H10.700Q13.200 9.800 13.200 12V16Z" fill="#3a4048"/><path d="M6.600 10H9.400L8.700 16H7.300Z" fill="#e8f0ff"/><path d="M7.500 11.500H8.500L8.700 16H7.300Z" fill="#2a7ae8"/><path d="M5.400 .6H10.600L12.800 2.800V6.200L10.400 9.700H5.600L3.200 6.200V2.800Z" fill="url(#gy)" stroke="#8a5c10" stroke-width="1"/><path d="M5.200 .2H10.800L13.100 2.600V3.700H2.900V2.600Z" fill="#1c1208"/></svg>
<span class="t" id="t72" style="top:137.03px;font-size:12px;line-height:14px;letter-spacing:0.000px;left:1355.5px;transform:scaleX(0.8932);transform-origin:0 0;">Referees</span>
<svg style="position:absolute;left:1337px;top:153px" width="12" height="16" viewBox="2 0 12 16" preserveAspectRatio="none"><path d="M3 15.500V12Q3 10 5.300 10H10.700Q13 10 13 12V15.500Z" fill="#fbfcff" stroke="#8c96a8" stroke-width=".8"/><path d="M7.400 10.500H8.600L8.900 14.500H7.100Z" fill="#2a6ad8"/><path d="M5 15.500H11" stroke="#8c96a8" stroke-width=".8"/><path d="M5.400 .6H10.600L12.800 2.800V6.200L10.400 9.700H5.600L3.200 6.200V2.800Z" fill="url(#gy)" stroke="#8a5c10" stroke-width="1"/><path d="M5.200 .2H10.800L13.100 2.600V3.700H2.900V2.600Z" fill="#1c1208"/></svg>
<span class="t" id="t73" style="top:155.03px;font-size:12px;line-height:14px;letter-spacing:-0.021px;left:1355.5px;">Officials</span>
<svg style="position:absolute;left:1335px;top:171px" width="16" height="16" viewBox="0 0 16 16" preserveAspectRatio="none"><path d="M2.800 8V15H13.200V8L8 3Z" fill="#f6f6f6" stroke="#555" stroke-width="1"/><path d="M.6 8.800L8 1.300L15.400 8.800" fill="none" stroke="#e0281e" stroke-width="2.300"/><rect x="4.800" y="9.300" width="6.400" height="5" fill="#8894ae" stroke="#4a5670" stroke-width=".8"/><rect x="5.800" y="10.300" width="2" height="3" fill="#c8d4ea"/></svg>
<span class="t" id="t74" style="top:173.03px;font-size:12px;line-height:14px;letter-spacing:0.000px;left:1355.5px;transform:scaleX(0.9613);transform-origin:0 0;">Clubs</span>
<svg style="position:absolute;left:1335px;top:189px" width="16" height="16" viewBox="0 0 16 16" preserveAspectRatio="none"><path d="M1 15.5V2.5H7.5V4H15V15.5H12.5V14.5H3.5V15.5Z" fill="#fff" stroke="#2f3e55" stroke-width="1"/><path d="M0.5 2H8V3.5H15.5V5H0.5Z" fill="#1e78e0"/><path d="M3.5 8H12.5M3.5 10H12.5M3.5 12H10" stroke="#c4c8d0" stroke-width="1"/></svg>
<span class="t" id="t75" style="top:191.03px;font-size:12px;line-height:14px;letter-spacing:0.000px;left:1355.5px;transform:scaleX(0.9564);transform-origin:0 0;">Categories</span>
<svg style="position:absolute;left:1335px;top:207px" width="16" height="16" viewBox="0 0 16 16" preserveAspectRatio="none"><circle cx="8" cy="8" r="7" fill="#a8c4f0" stroke="#5a78c0" stroke-width="1"/><path d="M3.500 4.500Q6 1.800 9 3.500Q9.500 6 7 7.500Q5 9.500 3 8Q2.500 6 3.500 4.500ZM9.500 8.500Q12.500 7.500 13.500 10Q12.500 13.500 10 13.500Q8.500 11 9.500 8.500Z" fill="#e8f0ff"/><path d="M3 5Q6 1.500 11 3" fill="none" stroke="#fff" stroke-width="1.200" opacity=".7"/></svg>
<span class="t" id="t76" style="top:209.03px;font-size:12px;line-height:14px;letter-spacing:-0.027px;left:1355.5px;">Nations</span>
<svg style="position:absolute;left:1335px;top:225px" width="16" height="16" viewBox="0 0 16 16" preserveAspectRatio="none"><circle cx="8" cy="8" r="7" fill="#8fd07a" stroke="#4a9a3a" stroke-width="1"/><path d="M4 4Q7 2 9 4Q8 7 5.5 8Q3 7 4 4Z M9 9Q12 8 12.5 11Q11 13.5 9.5 12.5Z" fill="#e4f6dc"/><path d="M8 9.5H12V8L15 10.5L12 13V11.5H8Z" fill="#5ab848" stroke="#fff" stroke-width=".6"/></svg>
<span class="t" id="t77" style="top:227.03px;font-size:12px;line-height:14px;letter-spacing:-0.220px;left:1355.5px;">Federal associations / Regions</span>
<svg style="position:absolute;left:1335px;top:243px" width="16" height="16" viewBox="0 0 16 16" preserveAspectRatio="none"><rect x="1" y="3" width="14" height="12" fill="#fdfdff" stroke="#445" stroke-width="1"/><rect x="5.5" y="1" width="5" height="3.5" fill="#fff" stroke="#445" stroke-width="1"/><path d="M3 8H13M3 10.5H13M3 13H10" stroke="#c8d4ea" stroke-width="1"/></svg>
<span class="t" id="t78" style="top:245.03px;font-size:12px;line-height:14px;letter-spacing:0.000px;left:1355.5px;transform:scaleX(0.9114);transform-origin:0 0;">Kata</span>
<div style="left:1323px;top:286px;width:371px;height:25px;background:linear-gradient(90deg,#e0e2e7 0,#e6e7ea 50%,#f0f0f0 100%);"></div>
<div style="left:1323px;top:286px;width:2px;height:1px;background:#4a7ad8;"></div>
<div style="left:1692px;top:286px;width:2px;height:1px;background:#4a7ad8;"></div>
<span class="t" id="t79" style="top:292.03px;font-size:12px;line-height:14px;letter-spacing:-0.133px;left:1334px;font-weight:bold;">Entries - Overviews / Statistics</span>
<svg style="position:absolute;left:1669px;top:290px" width="16" height="16" viewBox="0 0 16 16"><circle cx="8" cy="8" r="7.300" fill="#e0e1e5" stroke="#a8a8a8" stroke-width="1"/><path d="M4.800 7.300L8 4.300L11.200 7.300M4.800 11.300L8 8.300L11.200 11.300" fill="none" stroke="#222" stroke-width="1.300"/></svg>
<div style="left:1323px;top:311px;width:371px;height:254.5px;background:#f2f2f2;border:1px solid #ababab;border-top:none;box-sizing:border-box;"></div>
<svg style="position:absolute;left:1335px;top:321px" width="16" height="16" viewBox="0 0 16 16" preserveAspectRatio="none"><rect x=".7" y="2.2" width="10.6" height="11.6" fill="url(#gc)" stroke="#a86a00" stroke-width="1.4"/><rect x="2" y="3.5" width="2" height="9" fill="#ffe45a"/><path d="M3.5 4V2.2Q3.5 1 6 0.6Q8.5 1 8.5 2.2V4Z" fill="#e8eef6" stroke="#5a6678" stroke-width="1"/><path d="M6.5 5.5H12.5L15.5 8.5V15.5H6.5Z" fill="#fdfdff" stroke="#3a4458" stroke-width="1"/><path d="M12.5 5.5V8.5H15.5" fill="#cfd4e8" stroke="#3a4458" stroke-width=".8"/></svg>
<span class="t" id="t80" style="top:323.03px;font-size:12px;line-height:14px;letter-spacing:-0.108px;left:1355.5px;">All entries</span>
<svg style="position:absolute;left:1335px;top:339px" width="16" height="16" viewBox="0 0 16 16" preserveAspectRatio="none"><path d="M1.8 0.8H10.5L14 4.3V15.2H1.8Z" fill="#d6e6fa" stroke="#4a8ede" stroke-width="1.2"/><path d="M10.5 0.8V4.3H14" fill="#eaf2fd" stroke="#4a8ede" stroke-width="1"/><rect x="2.8" y="11.5" width="3.5" height="2.2" fill="#4a8ede"/><path d="M9.8 6L15.3 15.2H4.6Z" fill="#ffe9a0" stroke="#d88a18" stroke-width="1.1" stroke-linejoin="round"/><path d="M9.9 9V12.3M9.9 13.3V14.3" stroke="#c0681a" stroke-width="1.3"/></svg>
<span class="t" id="t81" style="top:341.03px;font-size:12px;line-height:14px;letter-spacing:-0.028px;left:1355.5px;">Waitinglist entries</span>
<svg style="position:absolute;left:1335px;top:357px" width="16" height="16" viewBox="0 0 16 16" preserveAspectRatio="none"><rect x=".7" y="2.2" width="10.6" height="11.6" fill="url(#gc)" stroke="#a86a00" stroke-width="1.4"/><rect x="2" y="3.5" width="2" height="9" fill="#ffe45a"/><path d="M3.5 4V2.2Q3.5 1 6 0.6Q8.5 1 8.5 2.2V4Z" fill="#e8eef6" stroke="#5a6678" stroke-width="1"/><path d="M6.5 5.5H12.5L15.5 8.5V15.5H6.5Z" fill="#fdfdff" stroke="#3a4458" stroke-width="1"/><path d="M12.5 5.5V8.5H15.5" fill="#cfd4e8" stroke="#3a4458" stroke-width=".8"/></svg>
<span class="t" id="t82" style="top:359.03px;font-size:12px;line-height:14px;letter-spacing:-0.196px;left:1355.5px;">Coach entries</span>
<svg style="position:absolute;left:1335px;top:375px" width="16" height="16" viewBox="0 0 16 16" preserveAspectRatio="none"><rect x=".7" y="2.2" width="10.6" height="11.6" fill="url(#gc)" stroke="#a86a00" stroke-width="1.4"/><rect x="2" y="3.5" width="2" height="9" fill="#ffe45a"/><path d="M3.5 4V2.2Q3.5 1 6 0.6Q8.5 1 8.5 2.2V4Z" fill="#e8eef6" stroke="#5a6678" stroke-width="1"/><path d="M6.5 5.5H12.5L15.5 8.5V15.5H6.5Z" fill="#fdfdff" stroke="#3a4458" stroke-width="1"/><path d="M12.5 5.5V8.5H15.5" fill="#cfd4e8" stroke="#3a4458" stroke-width=".8"/></svg>
<span class="t" id="t83" style="top:377.03px;font-size:12px;line-height:14px;letter-spacing:0.000px;left:1355.5px;transform:scaleX(0.9324);transform-origin:0 0;">Referee entries</span>
<svg style="position:absolute;left:1335px;top:393px" width="16" height="16" viewBox="0 0 16 16" preserveAspectRatio="none"><rect x=".7" y="2.2" width="10.6" height="11.6" fill="url(#gc)" stroke="#a86a00" stroke-width="1.4"/><rect x="2" y="3.5" width="2" height="9" fill="#ffe45a"/><path d="M3.5 4V2.2Q3.5 1 6 0.6Q8.5 1 8.5 2.2V4Z" fill="#e8eef6" stroke="#5a6678" stroke-width="1"/><path d="M6.5 5.5H12.5L15.5 8.5V15.5H6.5Z" fill="#fdfdff" stroke="#3a4458" stroke-width="1"/><path d="M12.5 5.5V8.5H15.5" fill="#cfd4e8" stroke="#3a4458" stroke-width=".8"/></svg>
<span class="t" id="t84" style="top:395.03px;font-size:12px;line-height:14px;letter-spacing:-0.090px;left:1355.5px;">Officials entries</span>
<svg style="position:absolute;left:1335px;top:411px" width="16" height="16" viewBox="0 0 16 16" preserveAspectRatio="none"><rect x=".7" y="2.2" width="10.6" height="11.6" fill="url(#gc)" stroke="#a86a00" stroke-width="1.4"/><rect x="2" y="3.5" width="2" height="9" fill="#ffe45a"/><path d="M3.5 4V2.2Q3.5 1 6 0.6Q8.5 1 8.5 2.2V4Z" fill="#e8eef6" stroke="#5a6678" stroke-width="1"/><path d="M6.5 5.5H12.5L15.5 8.5V15.5H6.5Z" fill="#fdfdff" stroke="#3a4458" stroke-width="1"/><path d="M12.5 5.5V8.5H15.5" fill="#cfd4e8" stroke="#3a4458" stroke-width=".8"/></svg>
<span class="t" id="t85" style="top:413.03px;font-size:12px;line-height:14px;letter-spacing:-0.069px;left:1355.5px;">Head of Delegation</span>
<svg style="position:absolute;left:1335px;top:429px" width="16" height="16" viewBox="0 0 16 16" preserveAspectRatio="none"><rect x="2.5" y="0.8" width="12.5" height="14.4" fill="#fcfcfc" stroke="#a8a8a8" stroke-width="1"/><path d="M10.5 15.2L15 10.7V15.2Z" fill="#dcdcdc"/><rect x="1.6" y="0.5" width="1.8" height="15" fill="#c25a28"/><path d="M1.2 2H3.6M1.2 4H3.6M1.2 6H3.6M1.2 8H3.6M1.2 10H3.6M1.2 12H3.6M1.2 14H3.6" stroke="#7a3a18" stroke-width=".7"/><rect x="6" y="3.2" width="6.5" height="1.9" fill="#5c8fe0"/><rect x="6" y="6" width="6.5" height="1.9" fill="#6c9be6"/></svg>
<span class="t" id="t86" style="top:431.03px;font-size:12px;line-height:14px;letter-spacing:-0.170px;left:1355.5px;">Clubs and entries</span>
<svg style="position:absolute;left:1335px;top:447px" width="16" height="16" viewBox="0 0 16 16" preserveAspectRatio="none"><rect x="2.5" y="0.8" width="12.5" height="14.4" fill="#fcfcfc" stroke="#a8a8a8" stroke-width="1"/><path d="M10.5 15.2L15 10.7V15.2Z" fill="#dcdcdc"/><rect x="1.6" y="0.5" width="1.8" height="15" fill="#c25a28"/><path d="M1.2 2H3.6M1.2 4H3.6M1.2 6H3.6M1.2 8H3.6M1.2 10H3.6M1.2 12H3.6M1.2 14H3.6" stroke="#7a3a18" stroke-width=".7"/><rect x="6" y="3.2" width="6.5" height="1.9" fill="#5c8fe0"/><rect x="6" y="6" width="6.5" height="1.9" fill="#6c9be6"/></svg>
<span class="t" id="t87" style="top:449.03px;font-size:12px;line-height:14px;letter-spacing:0.000px;left:1355.5px;transform:scaleX(0.9584);transform-origin:0 0;">States / Regions and entries</span>
<svg style="position:absolute;left:1335px;top:465px" width="16" height="16" viewBox="0 0 16 16" preserveAspectRatio="none"><rect x="2.5" y="0.8" width="12.5" height="14.4" fill="#fcfcfc" stroke="#a8a8a8" stroke-width="1"/><path d="M10.5 15.2L15 10.7V15.2Z" fill="#dcdcdc"/><rect x="1.6" y="0.5" width="1.8" height="15" fill="#c25a28"/><path d="M1.2 2H3.6M1.2 4H3.6M1.2 6H3.6M1.2 8H3.6M1.2 10H3.6M1.2 12H3.6M1.2 14H3.6" stroke="#7a3a18" stroke-width=".7"/><rect x="6" y="3.2" width="6.5" height="1.9" fill="#5c8fe0"/><rect x="6" y="6" width="6.5" height="1.9" fill="#6c9be6"/></svg>
<span class="t" id="t88" style="top:467.03px;font-size:12px;line-height:14px;letter-spacing:-0.100px;left:1355.5px;">Nations and entries</span>
<svg style="position:absolute;left:1335px;top:483px" width="16" height="16" viewBox="0 0 16 16" preserveAspectRatio="none"><rect x="2.5" y="0.8" width="12.5" height="14.4" fill="#fcfcfc" stroke="#a8a8a8" stroke-width="1"/><path d="M10.5 15.2L15 10.7V15.2Z" fill="#dcdcdc"/><rect x="1.6" y="0.5" width="1.8" height="15" fill="#c25a28"/><path d="M1.2 2H3.6M1.2 4H3.6M1.2 6H3.6M1.2 8H3.6M1.2 10H3.6M1.2 12H3.6M1.2 14H3.6" stroke="#7a3a18" stroke-width=".7"/><rect x="6" y="3.2" width="6.5" height="1.9" fill="#5c8fe0"/><rect x="6" y="6" width="6.5" height="1.9" fill="#6c9be6"/></svg>
<span class="t" id="t89" style="top:485.03px;font-size:12px;line-height:14px;letter-spacing:-0.193px;left:1355.5px;">Categories and entries</span>
<svg style="position:absolute;left:1335px;top:501px" width="16" height="16" viewBox="0 0 16 16" preserveAspectRatio="none"><rect x="2.5" y="0.8" width="12.5" height="14.4" fill="#fcfcfc" stroke="#a8a8a8" stroke-width="1"/><path d="M10.5 15.2L15 10.7V15.2Z" fill="#dcdcdc"/><rect x="1.6" y="0.5" width="1.8" height="15" fill="#c25a28"/><path d="M1.2 2H3.6M1.2 4H3.6M1.2 6H3.6M1.2 8H3.6M1.2 10H3.6M1.2 12H3.6M1.2 14H3.6" stroke="#7a3a18" stroke-width=".7"/><rect x="6" y="3.2" width="6.5" height="1.9" fill="#5c8fe0"/><rect x="6" y="6" width="6.5" height="1.9" fill="#6c9be6"/></svg>
<span class="t" id="t90" style="top:503.03px;font-size:12px;line-height:14px;letter-spacing:-0.022px;left:1355.5px;">Competitors in categories</span>
<svg style="position:absolute;left:1335px;top:519px" width="16" height="16" viewBox="0 0 16 16" preserveAspectRatio="none"><rect x="2.5" y="0.8" width="12.5" height="14.4" fill="#fcfcfc" stroke="#a8a8a8" stroke-width="1"/><path d="M10.5 15.2L15 10.7V15.2Z" fill="#dcdcdc"/><rect x="1.6" y="0.5" width="1.8" height="15" fill="#c25a28"/><path d="M1.2 2H3.6M1.2 4H3.6M1.2 6H3.6M1.2 8H3.6M1.2 10H3.6M1.2 12H3.6M1.2 14H3.6" stroke="#7a3a18" stroke-width=".7"/><rect x="6" y="3.2" width="6.5" height="1.9" fill="#5c8fe0"/><rect x="6" y="6" width="6.5" height="1.9" fill="#6c9be6"/></svg>
<span class="t" id="t91" style="top:521.03px;font-size:12px;line-height:14px;letter-spacing:-0.108px;left:1355.5px;">Clubs, Competitors, Categories</span>
<svg style="position:absolute;left:1335px;top:537px" width="16" height="16" viewBox="0 0 16 16" preserveAspectRatio="none"><rect x="2.5" y="0.8" width="12.5" height="14.4" fill="#fcfcfc" stroke="#a8a8a8" stroke-width="1"/><path d="M10.5 15.2L15 10.7V15.2Z" fill="#dcdcdc"/><rect x="1.6" y="0.5" width="1.8" height="15" fill="#c25a28"/><path d="M1.2 2H3.6M1.2 4H3.6M1.2 6H3.6M1.2 8H3.6M1.2 10H3.6M1.2 12H3.6M1.2 14H3.6" stroke="#7a3a18" stroke-width=".7"/><rect x="6" y="3.2" width="6.5" height="1.9" fill="#5c8fe0"/><rect x="6" y="6" width="6.5" height="1.9" fill="#6c9be6"/></svg>
<span class="t" id="t92" style="top:539.03px;font-size:12px;line-height:14px;letter-spacing:-0.108px;left:1355.5px;">Clubs, Categories, Competitors</span>
<div style="left:1323px;top:580px;width:371px;height:25px;background:linear-gradient(90deg,#e0e2e7 0,#e6e7ea 50%,#f0f0f0 100%);"></div>
<div style="left:1323px;top:580px;width:2px;height:1px;background:#4a7ad8;"></div>
<div style="left:1692px;top:580px;width:2px;height:1px;background:#4a7ad8;"></div>
<span class="t" id="t93" style="top:586.03px;font-size:12px;line-height:14px;letter-spacing:-0.121px;left:1334px;font-weight:bold;">Reports</span>
<svg style="position:absolute;left:1669px;top:584px" width="16" height="16" viewBox="0 0 16 16"><circle cx="8" cy="8" r="7.300" fill="#e0e1e5" stroke="#a8a8a8" stroke-width="1"/><path d="M4.800 7.300L8 4.300L11.200 7.300M4.800 11.300L8 8.300L11.200 11.300" fill="none" stroke="#222" stroke-width="1.300"/></svg>
<div style="left:1323px;top:605px;width:371px;height:470.5px;background:#f2f2f2;border:1px solid #ababab;border-top:none;box-sizing:border-box;"></div>
<svg style="position:absolute;left:1335px;top:615px" width="16" height="16" viewBox="0 0 16 16" preserveAspectRatio="none"><rect x="2.5" y="0.8" width="12.5" height="14.4" fill="#fcfcfc" stroke="#a8a8a8" stroke-width="1"/><path d="M10.5 15.2L15 10.7V15.2Z" fill="#dcdcdc"/><rect x="1.6" y="0.5" width="1.8" height="15" fill="#c25a28"/><path d="M1.2 2H3.6M1.2 4H3.6M1.2 6H3.6M1.2 8H3.6M1.2 10H3.6M1.2 12H3.6M1.2 14H3.6" stroke="#7a3a18" stroke-width=".7"/><rect x="6" y="3.2" width="6.5" height="1.9" fill="#5c8fe0"/><rect x="6" y="6" width="6.5" height="1.9" fill="#6c9be6"/></svg>
<span class="t" id="t94" style="top:617.03px;font-size:12px;line-height:14px;letter-spacing:-0.141px;left:1355.5px;">Result Book - Countries</span>
<svg style="position:absolute;left:1335px;top:633px" width="16" height="16" viewBox="0 0 16 16" preserveAspectRatio="none"><rect x="2.5" y="0.8" width="12.5" height="14.4" fill="#fcfcfc" stroke="#a8a8a8" stroke-width="1"/><path d="M10.5 15.2L15 10.7V15.2Z" fill="#dcdcdc"/><rect x="1.6" y="0.5" width="1.8" height="15" fill="#c25a28"/><path d="M1.2 2H3.6M1.2 4H3.6M1.2 6H3.6M1.2 8H3.6M1.2 10H3.6M1.2 12H3.6M1.2 14H3.6" stroke="#7a3a18" stroke-width=".7"/><rect x="6" y="3.2" width="6.5" height="1.9" fill="#5c8fe0"/><rect x="6" y="6" width="6.5" height="1.9" fill="#6c9be6"/></svg>
<span class="t" id="t95" style="top:635.03px;font-size:12px;line-height:14px;letter-spacing:-0.139px;left:1355.5px;">Result Book - Countries and Clubs</span>
<svg style="position:absolute;left:1335px;top:651px" width="16" height="16" viewBox="0 0 16 16" preserveAspectRatio="none"><rect x="2.5" y="0.8" width="12.5" height="14.4" fill="#fcfcfc" stroke="#a8a8a8" stroke-width="1"/><path d="M10.5 15.2L15 10.7V15.2Z" fill="#dcdcdc"/><rect x="1.6" y="0.5" width="1.8" height="15" fill="#c25a28"/><path d="M1.2 2H3.6M1.2 4H3.6M1.2 6H3.6M1.2 8H3.6M1.2 10H3.6M1.2 12H3.6M1.2 14H3.6" stroke="#7a3a18" stroke-width=".7"/><rect x="6" y="3.2" width="6.5" height="1.9" fill="#5c8fe0"/><rect x="6" y="6" width="6.5" height="1.9" fill="#6c9be6"/></svg>
<span class="t" id="t96" style="top:653.03px;font-size:12px;line-height:14px;letter-spacing:-0.187px;left:1355.5px;">Result Book - Clubs</span>
<svg style="position:absolute;left:1335px;top:687px" width="16" height="16" viewBox="0 0 16 16" preserveAspectRatio="none"><rect x="2.5" y="0.8" width="12.5" height="14.4" fill="#fcfcfc" stroke="#a8a8a8" stroke-width="1"/><path d="M10.5 15.2L15 10.7V15.2Z" fill="#dcdcdc"/><rect x="1.6" y="0.5" width="1.8" height="15" fill="#c25a28"/><path d="M1.2 2H3.6M1.2 4H3.6M1.2 6H3.6M1.2 8H3.6M1.2 10H3.6M1.2 12H3.6M1.2 14H3.6" stroke="#7a3a18" stroke-width=".7"/><rect x="6" y="3.2" width="6.5" height="1.9" fill="#5c8fe0"/><rect x="6" y="6" width="6.5" height="1.9" fill="#6c9be6"/></svg>
<span class="t" id="t97" style="top:689.03px;font-size:12px;line-height:14px;letter-spacing:-0.147px;left:1355.5px;">Country Entries</span>
<svg style="position:absolute;left:1335px;top:705px" width="16" height="16" viewBox="0 0 16 16" preserveAspectRatio="none"><rect x="2.5" y="0.8" width="12.5" height="14.4" fill="#fcfcfc" stroke="#a8a8a8" stroke-width="1"/><path d="M10.5 15.2L15 10.7V15.2Z" fill="#dcdcdc"/><rect x="1.6" y="0.5" width="1.8" height="15" fill="#c25a28"/><path d="M1.2 2H3.6M1.2 4H3.6M1.2 6H3.6M1.2 8H3.6M1.2 10H3.6M1.2 12H3.6M1.2 14H3.6" stroke="#7a3a18" stroke-width=".7"/><rect x="6" y="3.2" width="6.5" height="1.9" fill="#5c8fe0"/><rect x="6" y="6" width="6.5" height="1.9" fill="#6c9be6"/></svg>
<span class="t" id="t98" style="top:707.03px;font-size:12px;line-height:14px;letter-spacing:0.000px;left:1355.5px;transform:scaleX(0.9560);transform-origin:0 0;">Club Entries</span>
<svg style="position:absolute;left:1335px;top:723px" width="16" height="16" viewBox="0 0 16 16" preserveAspectRatio="none"><rect x="2.5" y="0.8" width="12.5" height="14.4" fill="#fcfcfc" stroke="#a8a8a8" stroke-width="1"/><path d="M10.5 15.2L15 10.7V15.2Z" fill="#dcdcdc"/><rect x="1.6" y="0.5" width="1.8" height="15" fill="#c25a28"/><path d="M1.2 2H3.6M1.2 4H3.6M1.2 6H3.6M1.2 8H3.6M1.2 10H3.6M1.2 12H3.6M1.2 14H3.6" stroke="#7a3a18" stroke-width=".7"/><rect x="6" y="3.2" width="6.5" height="1.9" fill="#5c8fe0"/><rect x="6" y="6" width="6.5" height="1.9" fill="#6c9be6"/></svg>
<span class="t" id="t99" style="top:725.03px;font-size:12px;line-height:14px;letter-spacing:-0.026px;left:1355.5px;">Participation (Total)</span>
<svg style="position:absolute;left:1335px;top:741px" width="16" height="16" viewBox="0 0 16 16" preserveAspectRatio="none"><rect x="2.5" y="0.8" width="12.5" height="14.4" fill="#fcfcfc" stroke="#a8a8a8" stroke-width="1"/><path d="M10.5 15.2L15 10.7V15.2Z" fill="#dcdcdc"/><rect x="1.6" y="0.5" width="1.8" height="15" fill="#c25a28"/><path d="M1.2 2H3.6M1.2 4H3.6M1.2 6H3.6M1.2 8H3.6M1.2 10H3.6M1.2 12H3.6M1.2 14H3.6" stroke="#7a3a18" stroke-width=".7"/><rect x="6" y="3.2" width="6.5" height="1.9" fill="#5c8fe0"/><rect x="6" y="6" width="6.5" height="1.9" fill="#6c9be6"/></svg>
<span class="t" id="t100" style="top:743.03px;font-size:12px;line-height:14px;letter-spacing:-0.092px;left:1355.5px;">Participation (Entries By Birthday) by Club</span>
<svg style="position:absolute;left:1335px;top:759px" width="16" height="16" viewBox="0 0 16 16" preserveAspectRatio="none"><rect x="2.5" y="0.8" width="12.5" height="14.4" fill="#fcfcfc" stroke="#a8a8a8" stroke-width="1"/><path d="M10.5 15.2L15 10.7V15.2Z" fill="#dcdcdc"/><rect x="1.6" y="0.5" width="1.8" height="15" fill="#c25a28"/><path d="M1.2 2H3.6M1.2 4H3.6M1.2 6H3.6M1.2 8H3.6M1.2 10H3.6M1.2 12H3.6M1.2 14H3.6" stroke="#7a3a18" stroke-width=".7"/><rect x="6" y="3.2" width="6.5" height="1.9" fill="#5c8fe0"/><rect x="6" y="6" width="6.5" height="1.9" fill="#6c9be6"/></svg>
<span class="t" id="t101" style="top:761.03px;font-size:12px;line-height:14px;letter-spacing:-0.096px;left:1355.5px;">Participation (Entries)</span>
<svg style="position:absolute;left:1335px;top:777px" width="16" height="16" viewBox="0 0 16 16" preserveAspectRatio="none"><rect x="2.5" y="0.8" width="12.5" height="14.4" fill="#fcfcfc" stroke="#a8a8a8" stroke-width="1"/><path d="M10.5 15.2L15 10.7V15.2Z" fill="#dcdcdc"/><rect x="1.6" y="0.5" width="1.8" height="15" fill="#c25a28"/><path d="M1.2 2H3.6M1.2 4H3.6M1.2 6H3.6M1.2 8H3.6M1.2 10H3.6M1.2 12H3.6M1.2 14H3.6" stroke="#7a3a18" stroke-width=".7"/><rect x="6" y="3.2" width="6.5" height="1.9" fill="#5c8fe0"/><rect x="6" y="6" width="6.5" height="1.9" fill="#6c9be6"/></svg>
<span class="t" id="t102" style="top:779.03px;font-size:12px;line-height:14px;letter-spacing:-0.072px;left:1355.5px;">Participation (Entries) by Club</span>
<svg style="position:absolute;left:1335px;top:795px" width="16" height="16" viewBox="0 0 16 16" preserveAspectRatio="none"><rect x="2.5" y="0.8" width="12.5" height="14.4" fill="#fcfcfc" stroke="#a8a8a8" stroke-width="1"/><path d="M10.5 15.2L15 10.7V15.2Z" fill="#dcdcdc"/><rect x="1.6" y="0.5" width="1.8" height="15" fill="#c25a28"/><path d="M1.2 2H3.6M1.2 4H3.6M1.2 6H3.6M1.2 8H3.6M1.2 10H3.6M1.2 12H3.6M1.2 14H3.6" stroke="#7a3a18" stroke-width=".7"/><rect x="6" y="3.2" width="6.5" height="1.9" fill="#5c8fe0"/><rect x="6" y="6" width="6.5" height="1.9" fill="#6c9be6"/></svg>
<span class="t" id="t103" style="top:797.03px;font-size:12px;line-height:14px;letter-spacing:-0.112px;left:1355.5px;">Participation (Entries By Birthday)</span>
<svg style="position:absolute;left:1335px;top:813px" width="16" height="16" viewBox="0 0 16 16" preserveAspectRatio="none"><rect x="2.5" y="0.8" width="12.5" height="14.4" fill="#fcfcfc" stroke="#a8a8a8" stroke-width="1"/><path d="M10.5 15.2L15 10.7V15.2Z" fill="#dcdcdc"/><rect x="1.6" y="0.5" width="1.8" height="15" fill="#c25a28"/><path d="M1.2 2H3.6M1.2 4H3.6M1.2 6H3.6M1.2 8H3.6M1.2 10H3.6M1.2 12H3.6M1.2 14H3.6" stroke="#7a3a18" stroke-width=".7"/><rect x="6" y="3.2" width="6.5" height="1.9" fill="#5c8fe0"/><rect x="6" y="6" width="6.5" height="1.9" fill="#6c9be6"/></svg>
<span class="t" id="t104" style="top:815.03px;font-size:12px;line-height:14px;letter-spacing:-0.092px;left:1355.5px;">Participation (Entries By Birthday) by Club</span>
<svg style="position:absolute;left:1335px;top:831px" width="16" height="16" viewBox="0 0 16 16" preserveAspectRatio="none"><rect x="2.5" y="0.8" width="12.5" height="14.4" fill="#fcfcfc" stroke="#a8a8a8" stroke-width="1"/><path d="M10.5 15.2L15 10.7V15.2Z" fill="#dcdcdc"/><rect x="1.6" y="0.5" width="1.8" height="15" fill="#c25a28"/><path d="M1.2 2H3.6M1.2 4H3.6M1.2 6H3.6M1.2 8H3.6M1.2 10H3.6M1.2 12H3.6M1.2 14H3.6" stroke="#7a3a18" stroke-width=".7"/><rect x="6" y="3.2" width="6.5" height="1.9" fill="#5c8fe0"/><rect x="6" y="6" width="6.5" height="1.9" fill="#6c9be6"/></svg>
<span class="t" id="t105" style="top:833.03px;font-size:12px;line-height:14px;letter-spacing:0.058px;left:1355.5px;">Participation Count</span>
<svg style="position:absolute;left:1335px;top:849px" width="16" height="16" viewBox="0 0 16 16" preserveAspectRatio="none"><rect x="2.5" y="0.8" width="12.5" height="14.4" fill="#fcfcfc" stroke="#a8a8a8" stroke-width="1"/><path d="M10.5 15.2L15 10.7V15.2Z" fill="#dcdcdc"/><rect x="1.6" y="0.5" width="1.8" height="15" fill="#c25a28"/><path d="M1.2 2H3.6M1.2 4H3.6M1.2 6H3.6M1.2 8H3.6M1.2 10H3.6M1.2 12H3.6M1.2 14H3.6" stroke="#7a3a18" stroke-width=".7"/><rect x="6" y="3.2" width="6.5" height="1.9" fill="#5c8fe0"/><rect x="6" y="6" width="6.5" height="1.9" fill="#6c9be6"/></svg>
<span class="t" id="t106" style="top:851.03px;font-size:12px;line-height:14px;letter-spacing:0.040px;left:1355.5px;">Participation Count by Club</span>
<svg style="position:absolute;left:1335px;top:867px" width="16" height="16" viewBox="0 0 16 16" preserveAspectRatio="none"><rect x="2.5" y="0.8" width="12.5" height="14.4" fill="#fcfcfc" stroke="#a8a8a8" stroke-width="1"/><path d="M10.5 15.2L15 10.7V15.2Z" fill="#dcdcdc"/><rect x="1.6" y="0.5" width="1.8" height="15" fill="#c25a28"/><path d="M1.2 2H3.6M1.2 4H3.6M1.2 6H3.6M1.2 8H3.6M1.2 10H3.6M1.2 12H3.6M1.2 14H3.6" stroke="#7a3a18" stroke-width=".7"/><rect x="6" y="3.2" width="6.5" height="1.9" fill="#5c8fe0"/><rect x="6" y="6" width="6.5" height="1.9" fill="#6c9be6"/></svg>
<span class="t" id="t107" style="top:869.03px;font-size:12px;line-height:14px;letter-spacing:0.000px;left:1355.5px;transform:scaleX(0.9476);transform-origin:0 0;">Statistics</span>
<svg style="position:absolute;left:1335px;top:885px" width="16" height="16" viewBox="0 0 16 16" preserveAspectRatio="none"><rect x="2.5" y="0.8" width="12.5" height="14.4" fill="#fcfcfc" stroke="#a8a8a8" stroke-width="1"/><path d="M10.5 15.2L15 10.7V15.2Z" fill="#dcdcdc"/><rect x="1.6" y="0.5" width="1.8" height="15" fill="#c25a28"/><path d="M1.2 2H3.6M1.2 4H3.6M1.2 6H3.6M1.2 8H3.6M1.2 10H3.6M1.2 12H3.6M1.2 14H3.6" stroke="#7a3a18" stroke-width=".7"/><rect x="6" y="3.2" width="6.5" height="1.9" fill="#5c8fe0"/><rect x="6" y="6" width="6.5" height="1.9" fill="#6c9be6"/></svg>
<span class="t" id="t108" style="top:887.03px;font-size:12px;line-height:14px;letter-spacing:0.057px;left:1355.5px;">Participation Count - Officials</span>
<svg style="position:absolute;left:1335px;top:903px" width="16" height="16" viewBox="0 0 16 16" preserveAspectRatio="none"><rect x="2.5" y="0.8" width="12.5" height="14.4" fill="#fcfcfc" stroke="#a8a8a8" stroke-width="1"/><path d="M10.5 15.2L15 10.7V15.2Z" fill="#dcdcdc"/><rect x="1.6" y="0.5" width="1.8" height="15" fill="#c25a28"/><path d="M1.2 2H3.6M1.2 4H3.6M1.2 6H3.6M1.2 8H3.6M1.2 10H3.6M1.2 12H3.6M1.2 14H3.6" stroke="#7a3a18" stroke-width=".7"/><rect x="6" y="3.2" width="6.5" height="1.9" fill="#5c8fe0"/><rect x="6" y="6" width="6.5" height="1.9" fill="#6c9be6"/></svg>
<span class="t" id="t109" style="top:905.03px;font-size:12px;line-height:14px;letter-spacing:-0.086px;left:1355.5px;">Officials per Category</span>
<svg style="position:absolute;left:1335px;top:921px" width="16" height="16" viewBox="0 0 16 16" preserveAspectRatio="none"><rect x="2.5" y="0.8" width="12.5" height="14.4" fill="#fcfcfc" stroke="#a8a8a8" stroke-width="1"/><path d="M10.5 15.2L15 10.7V15.2Z" fill="#dcdcdc"/><rect x="1.6" y="0.5" width="1.8" height="15" fill="#c25a28"/><path d="M1.2 2H3.6M1.2 4H3.6M1.2 6H3.6M1.2 8H3.6M1.2 10H3.6M1.2 12H3.6M1.2 14H3.6" stroke="#7a3a18" stroke-width=".7"/><rect x="6" y="3.2" width="6.5" height="1.9" fill="#5c8fe0"/><rect x="6" y="6" width="6.5" height="1.9" fill="#6c9be6"/></svg>
<span class="t" id="t110" style="top:923.03px;font-size:12px;line-height:14px;letter-spacing:-0.064px;left:1355.5px;">Officials per Category by Club</span>
<svg style="position:absolute;left:1335px;top:939px" width="16" height="16" viewBox="0 0 16 16" preserveAspectRatio="none"><rect x="2.5" y="0.8" width="12.5" height="14.4" fill="#fcfcfc" stroke="#a8a8a8" stroke-width="1"/><path d="M10.5 15.2L15 10.7V15.2Z" fill="#dcdcdc"/><rect x="1.6" y="0.5" width="1.8" height="15" fill="#c25a28"/><path d="M1.2 2H3.6M1.2 4H3.6M1.2 6H3.6M1.2 8H3.6M1.2 10H3.6M1.2 12H3.6M1.2 14H3.6" stroke="#7a3a18" stroke-width=".7"/><rect x="6" y="3.2" width="6.5" height="1.9" fill="#5c8fe0"/><rect x="6" y="6" width="6.5" height="1.9" fill="#6c9be6"/></svg>
<span class="t" id="t111" style="top:941.03px;font-size:12px;line-height:14px;letter-spacing:-0.010px;left:1355.5px;">Officials per Country</span>
<svg style="position:absolute;left:1335px;top:957px" width="16" height="16" viewBox="0 0 16 16" preserveAspectRatio="none"><rect x="2.5" y="0.8" width="12.5" height="14.4" fill="#fcfcfc" stroke="#a8a8a8" stroke-width="1"/><path d="M10.5 15.2L15 10.7V15.2Z" fill="#dcdcdc"/><rect x="1.6" y="0.5" width="1.8" height="15" fill="#c25a28"/><path d="M1.2 2H3.6M1.2 4H3.6M1.2 6H3.6M1.2 8H3.6M1.2 10H3.6M1.2 12H3.6M1.2 14H3.6" stroke="#7a3a18" stroke-width=".7"/><rect x="6" y="3.2" width="6.5" height="1.9" fill="#5c8fe0"/><rect x="6" y="6" width="6.5" height="1.9" fill="#6c9be6"/></svg>
<span class="t" id="t112" style="top:959.03px;font-size:12px;line-height:14px;letter-spacing:-0.049px;left:1355.5px;">Officials per Club</span>
<svg style="position:absolute;left:1335px;top:975px" width="16" height="16" viewBox="0 0 16 16" preserveAspectRatio="none"><rect x="2.5" y="0.8" width="12.5" height="14.4" fill="#fcfcfc" stroke="#a8a8a8" stroke-width="1"/><path d="M10.5 15.2L15 10.7V15.2Z" fill="#dcdcdc"/><rect x="1.6" y="0.5" width="1.8" height="15" fill="#c25a28"/><path d="M1.2 2H3.6M1.2 4H3.6M1.2 6H3.6M1.2 8H3.6M1.2 10H3.6M1.2 12H3.6M1.2 14H3.6" stroke="#7a3a18" stroke-width=".7"/><rect x="6" y="3.2" width="6.5" height="1.9" fill="#5c8fe0"/><rect x="6" y="6" width="6.5" height="1.9" fill="#6c9be6"/></svg>
<span class="t" id="t113" style="top:977.03px;font-size:12px;line-height:14px;letter-spacing:-0.111px;left:1355.5px;">Officials by Other Role</span>
<svg style="position:absolute;left:1335px;top:993px" width="16" height="16" viewBox="0 0 16 16" preserveAspectRatio="none"><rect x="2.5" y="0.8" width="12.5" height="14.4" fill="#fcfcfc" stroke="#a8a8a8" stroke-width="1"/><path d="M10.5 15.2L15 10.7V15.2Z" fill="#dcdcdc"/><rect x="1.6" y="0.5" width="1.8" height="15" fill="#c25a28"/><path d="M1.2 2H3.6M1.2 4H3.6M1.2 6H3.6M1.2 8H3.6M1.2 10H3.6M1.2 12H3.6M1.2 14H3.6" stroke="#7a3a18" stroke-width=".7"/><rect x="6" y="3.2" width="6.5" height="1.9" fill="#5c8fe0"/><rect x="6" y="6" width="6.5" height="1.9" fill="#6c9be6"/></svg>
<span class="t" id="t114" style="top:995.03px;font-size:12px;line-height:14px;letter-spacing:-0.115px;left:1355.5px;">Entries in Categories - Country</span>
<svg style="position:absolute;left:1335px;top:1011px" width="16" height="16" viewBox="0 0 16 16" preserveAspectRatio="none"><rect x="2.5" y="0.8" width="12.5" height="14.4" fill="#fcfcfc" stroke="#a8a8a8" stroke-width="1"/><path d="M10.5 15.2L15 10.7V15.2Z" fill="#dcdcdc"/><rect x="1.6" y="0.5" width="1.8" height="15" fill="#c25a28"/><path d="M1.2 2H3.6M1.2 4H3.6M1.2 6H3.6M1.2 8H3.6M1.2 10H3.6M1.2 12H3.6M1.2 14H3.6" stroke="#7a3a18" stroke-width=".7"/><rect x="6" y="3.2" width="6.5" height="1.9" fill="#5c8fe0"/><rect x="6" y="6" width="6.5" height="1.9" fill="#6c9be6"/></svg>
<span class="t" id="t115" style="top:1013.03px;font-size:12px;line-height:14px;letter-spacing:0.000px;left:1355.5px;transform:scaleX(0.9561);transform-origin:0 0;">Entries in Categories</span>
<svg style="position:absolute;left:1335px;top:1029px" width="16" height="16" viewBox="0 0 16 16" preserveAspectRatio="none"><rect x="2.5" y="0.8" width="12.5" height="14.4" fill="#fcfcfc" stroke="#a8a8a8" stroke-width="1"/><path d="M10.5 15.2L15 10.7V15.2Z" fill="#dcdcdc"/><rect x="1.6" y="0.5" width="1.8" height="15" fill="#c25a28"/><path d="M1.2 2H3.6M1.2 4H3.6M1.2 6H3.6M1.2 8H3.6M1.2 10H3.6M1.2 12H3.6M1.2 14H3.6" stroke="#7a3a18" stroke-width=".7"/><rect x="6" y="3.2" width="6.5" height="1.9" fill="#5c8fe0"/><rect x="6" y="6" width="6.5" height="1.9" fill="#6c9be6"/></svg>
<span class="t" id="t116" style="top:1031.03px;font-size:12px;line-height:14px;letter-spacing:-0.180px;left:1355.5px;">Entries in Categories 1 Athlete</span>
<svg style="position:absolute;left:1335px;top:1047px" width="16" height="16" viewBox="0 0 16 16" preserveAspectRatio="none"><rect x="2.5" y="0.8" width="12.5" height="14.4" fill="#fcfcfc" stroke="#a8a8a8" stroke-width="1"/><path d="M10.5 15.2L15 10.7V15.2Z" fill="#dcdcdc"/><rect x="1.6" y="0.5" width="1.8" height="15" fill="#c25a28"/><path d="M1.2 2H3.6M1.2 4H3.6M1.2 6H3.6M1.2 8H3.6M1.2 10H3.6M1.2 12H3.6M1.2 14H3.6" stroke="#7a3a18" stroke-width=".7"/><rect x="6" y="3.2" width="6.5" height="1.9" fill="#5c8fe0"/><rect x="6" y="6" width="6.5" height="1.9" fill="#6c9be6"/></svg>
<span class="t" id="t117" style="top:1049.03px;font-size:12px;line-height:14px;letter-spacing:-0.112px;left:1355.5px;">Entries in Categories - Weigh-In</span>
<div style="left:1323px;top:1090px;width:371px;height:25px;background:linear-gradient(90deg,#e0e2e7 0,#e6e7ea 50%,#f0f0f0 100%);"></div>
<div style="left:1323px;top:1090px;width:2px;height:1px;background:#4a7ad8;"></div>
<div style="left:1692px;top:1090px;width:2px;height:1px;background:#4a7ad8;"></div>
<span class="t" id="t118" style="top:1096.03px;font-size:12px;line-height:14px;letter-spacing:0.000px;left:1334px;transform:scaleX(0.9554);transform-origin:0 0;font-weight:bold;">Entries - Chart</span>
<svg style="position:absolute;left:1669px;top:1094px" width="16" height="16" viewBox="0 0 16 16"><circle cx="8" cy="8" r="7.300" fill="#e0e1e5" stroke="#a8a8a8" stroke-width="1"/><path d="M4.800 7.300L8 4.300L11.200 7.300M4.800 11.300L8 8.300L11.200 11.300" fill="none" stroke="#222" stroke-width="1.300"/></svg>
<div style="left:1323px;top:1115px;width:371px;height:32.5px;background:#f2f2f2;border-left:1px solid #ababab;border-right:1px solid #ababab;box-sizing:border-box;"></div>
<svg style="position:absolute;left:1335px;top:1125px" width="16" height="16" viewBox="0 0 16 16" preserveAspectRatio="none"><rect x="1" y="7.5" width="4.5" height="8" fill="#f07070" stroke="#e04848" stroke-width=".8"/><rect x="5.8" y="1.5" width="5" height="14" fill="#7a9cf0" stroke="#4a78d8" stroke-width=".8"/><rect x="11" y="10.5" width="4.2" height="5" fill="#5ab848" stroke="#3a9030" stroke-width=".8"/></svg>
<span class="t" id="t119" style="top:1127.03px;font-size:12px;line-height:14px;letter-spacing:-0.170px;left:1355.5px;">Clubs and entries</span>
<div style="left:1337px;top:1146px;width:10px;height:1.5px;background:#9ad08a;border-radius:5px 5px 0 0;"></div>
<div style="left:1310px;top:1148px;width:406px;height:27px;background:#f0f0f0;"></div>
<svg style="position:absolute;left:1290px;top:1154px" width="16" height="16" viewBox="0 0 16 16" preserveAspectRatio="none"><rect x=".7" y="1.7" width="14.6" height="12.6" fill="#fff" stroke="#000" stroke-width="1.4"/><rect x="1.4" y="2.4" width="13.2" height="2.2" fill="#c050ff"/><path d="M1 5.2H15" stroke="#000" stroke-width="1"/></svg>
<svg style="position:absolute;left:1313px;top:1154px" width="16" height="16" viewBox="0 0 16 16" preserveAspectRatio="none"><path d="M3 1H11L14.5 4.5V15.5H3Z" fill="#fff" stroke="#b8bcc8" stroke-width="1"/><circle cx="4.8" cy="9.5" r="3.3" fill="#f2b830" stroke="#c8881a" stroke-width=".8"/><rect x="2.6" y="3" width="4.4" height="3.2" fill="#3a78d8"/></svg>
<span class="t" id="t120" style="top:1156.03px;font-size:12px;line-height:14px;letter-spacing:-0.048px;left:1337.5px;">Certificate</span>
<div style="left:1395px;top:1152px;width:1px;height:19px;background:#d0d0d0;"></div>
<div style="left:1399px;top:1150px;width:131px;height:24px;background:#d0d0d0;"></div>
<svg style="position:absolute;left:1402px;top:1154px" width="16" height="16" viewBox="0 0 16 16" preserveAspectRatio="none"><rect x=".8" y="5.200" width="14.400" height="10.300" fill="#fff" stroke="#5a6478" stroke-width="1"/><path d="M1 8.800H15M1 12.200H15M5.500 5.200V15.500M10.500 8.800V15.500" stroke="#a4b0c4" stroke-width=".8"/><rect x=".5" y="2.300" width="4.800" height="3.600" fill="#1c64d8"/><rect x="1" y="3" width="3.800" height="1" fill="#8cc0ff"/><circle cx="11" cy="4.800" r="4.700" fill="#3cc43c" stroke="#1c8c1c" stroke-width="1"/><rect x="8.300" y="2.300" width="5.400" height="5" rx=".6" fill="#0c6c0c"/><path d="M9.200 4.300L10.700 6.200L12.900 3" fill="none" stroke="#fff" stroke-width="1.300"/></svg>
<span class="t" id="t121" style="top:1156.03px;font-size:12px;line-height:14px;letter-spacing:-0.056px;left:1425px;">Main data / Entries</span>
<div style="left:0px;top:1177px;width:1720px;height:23px;background:linear-gradient(#9c9c9e 0,#b4b5b8 1.500px,#cfd0d5 3px,#dcdde2 9px,#d9dadf 16px,#d0d1d6 21px,#fff 21.500px,#fff 23px);"></div>
<span class="t" id="t122" style="top:1182.70px;font-size:10px;line-height:12px;letter-spacing:0.196px;left:5px;font-weight:bold;color:#111;">2024-03-08 11:56:18:888 [INFO] Messages found 0</span>
<svg style="position:absolute;left:1706px;top:1186px" width="12" height="12" viewBox="0 0 12 12"><path d="M9 2H11V4H9ZM9 5.500H11V7.500H9ZM5.500 5.500H7.500V7.500H5.500ZM9 9H11V11H9ZM5.500 9H7.500V11H5.500ZM2 9H4V11H2Z" fill="#9a9a9a"/></svg>
<svg style="position:absolute;left:440px;top:260px" width="330" height="310" viewBox="440 260 330 310"><path d="M490 303L721.700 390.400L606.500 417.400L580.100 532.400Z" fill="#fff" stroke="#fff" stroke-width="13" stroke-linejoin="miter" stroke-miterlimit="6" opacity=".75"/><path d="M490 303L721.700 390.400L606.500 417.400L580.100 532.400Z" fill="rgba(238,118,118,.88)"/></svg>
</body></html>
